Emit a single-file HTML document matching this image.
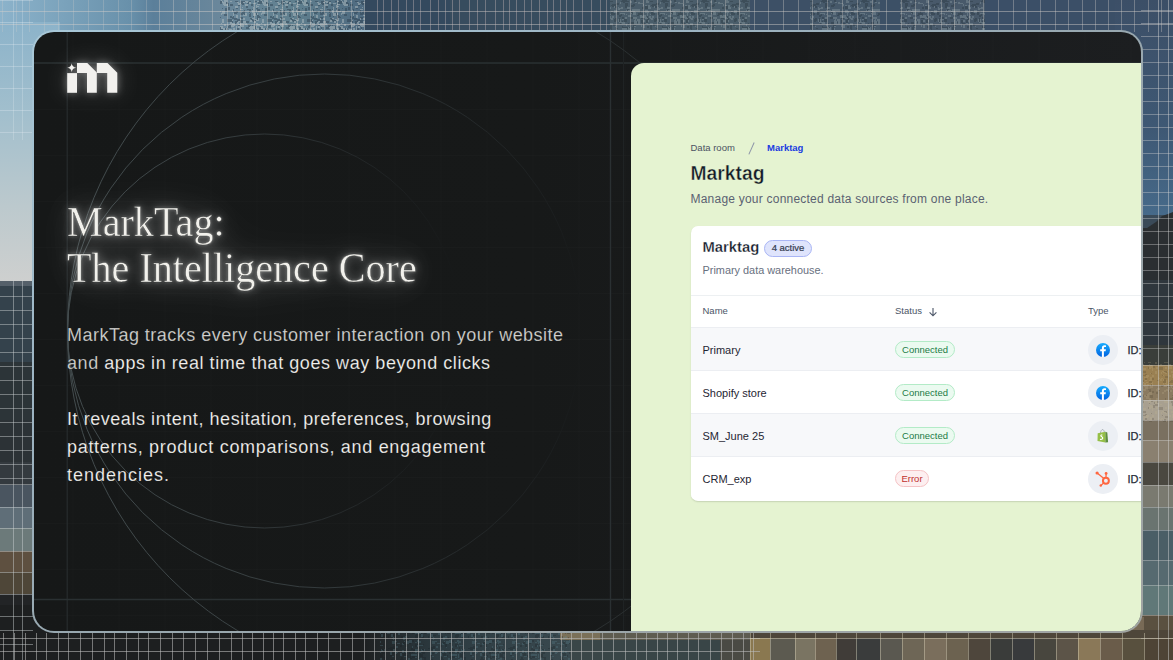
<!DOCTYPE html>
<html><head><meta charset="utf-8">
<style>
*{margin:0;padding:0;box-sizing:border-box}
html,body{width:1173px;height:660px;overflow:hidden;background:#3a4a58;font-family:"Liberation Sans",sans-serif}
#bg{position:absolute;left:0;top:0;width:1173px;height:660px}
.card{position:absolute;left:34px;top:32px;width:1107px;height:599px;border-radius:20px;overflow:hidden;background:linear-gradient(90deg,#161818 0%,#171919 45%,#1c1e20 100%)}
.cardborder{position:absolute;left:32px;top:30px;width:1111px;height:603px;border-radius:22px;background:linear-gradient(150deg,#a8c8d8 0%,#9db4c2 30%,#98a8b0 50%,#a0a4a2 100%)}
.abs{position:absolute;white-space:nowrap}
.title{font-family:"Liberation Serif",serif;font-size:42px;line-height:46px;transform-origin:0 0;transform:scaleX(0.955);color:#f2f1ec;-webkit-text-stroke:0.45px rgba(22,24,24,0.7);text-shadow:0 0 3px rgba(255,255,255,0.35);filter:drop-shadow(0 0 5px rgba(255,255,255,0.35)) drop-shadow(0 0 14px rgba(255,255,255,0.2)) drop-shadow(0 0 24px rgba(255,255,255,0.1))}
.para{font-size:18px;line-height:28px;letter-spacing:0.45px;color:#f2f1ee;-webkit-text-stroke:0.3px rgba(22,24,24,0.45)}
.panel{position:absolute;left:597px;top:30.5px;width:520px;height:580px;background:#e5f3d1;border-top-left-radius:13px;overflow:hidden}
.t{line-height:1}
.tcard{position:absolute;left:59.5px;top:163px;width:600px;height:275px;background:#fff;border-radius:7px;box-shadow:0 1px 1.5px rgba(60,70,50,0.18);overflow:hidden}
.badge{position:absolute;border:1px solid;border-radius:9px;font-size:9.5px;line-height:15px;text-align:center;white-space:nowrap}
.hdr{position:absolute;left:0;top:69px;width:600px;height:32.5px;border-top:1px solid #edf0f2;background:#fff}
.row{position:absolute;left:0;width:600px;height:43px;border-top:1px solid #eceef2}
.ic{position:absolute;width:30px;height:30px;border-radius:50%;background:#eceff4}
</style></head>
<body>
<svg id="bg" width="1173" height="660" viewBox="0 0 1173 660"><defs><pattern id="sp1" patternUnits="userSpaceOnUse" width="40" height="40"><rect x="15" y="37" width="2" height="2" fill="#2a3c4c"/><rect x="30" y="37" width="1" height="1" fill="#2a3c4c"/><rect x="30" y="16" width="2" height="2" fill="#2a3c4c"/><rect x="30" y="34" width="3" height="3" fill="#2a3c4c"/><rect x="9" y="14" width="2" height="3" fill="#2a3c4c"/><rect x="4" y="10" width="1" height="2" fill="#2a3c4c"/><rect x="17" y="30" width="3" height="3" fill="#b9c2c4"/><rect x="36" y="28" width="2" height="2" fill="#b9c2c4"/><rect x="8" y="31" width="2" height="2" fill="#2a3c4c"/><rect x="27" y="19" width="3" height="3" fill="#2a3c4c"/><rect x="34" y="37" width="3" height="2" fill="#2a3c4c"/><rect x="1" y="17" width="2" height="2" fill="#2a3c4c"/><rect x="36" y="36" width="1" height="2" fill="#2a3c4c"/><rect x="36" y="17" width="2" height="1" fill="#b9c2c4"/><rect x="30" y="5" width="2" height="1" fill="#b9c2c4"/><rect x="9" y="1" width="2" height="3" fill="#2a3c4c"/><rect x="7" y="2" width="1" height="3" fill="#2a3c4c"/><rect x="21" y="35" width="2" height="2" fill="#2a3c4c"/><rect x="19" y="0" width="1" height="1" fill="#2a3c4c"/><rect x="2" y="12" width="3" height="2" fill="#2a3c4c"/><rect x="9" y="2" width="2" height="2" fill="#b9c2c4"/><rect x="8" y="24" width="3" height="3" fill="#2a3c4c"/><rect x="24" y="38" width="1" height="2" fill="#b9c2c4"/><rect x="15" y="19" width="3" height="2" fill="#b9c2c4"/><rect x="35" y="21" width="1" height="3" fill="#2a3c4c"/><rect x="20" y="1" width="3" height="2" fill="#b9c2c4"/><rect x="21" y="29" width="2" height="2" fill="#2a3c4c"/><rect x="17" y="31" width="1" height="1" fill="#2a3c4c"/><rect x="1" y="23" width="2" height="3" fill="#b9c2c4"/><rect x="38" y="20" width="2" height="2" fill="#b9c2c4"/><rect x="23" y="38" width="2" height="2" fill="#2a3c4c"/><rect x="6" y="1" width="2" height="2" fill="#b9c2c4"/><rect x="17" y="15" width="2" height="2" fill="#2a3c4c"/><rect x="6" y="6" width="2" height="2" fill="#2a3c4c"/><rect x="14" y="28" width="2" height="1" fill="#b9c2c4"/><rect x="13" y="36" width="3" height="2" fill="#b9c2c4"/><rect x="7" y="2" width="2" height="2" fill="#2a3c4c"/><rect x="36" y="11" width="2" height="2" fill="#2a3c4c"/><rect x="5" y="22" width="2" height="3" fill="#b9c2c4"/><rect x="17" y="29" width="2" height="3" fill="#b9c2c4"/><rect x="36" y="26" width="1" height="3" fill="#b9c2c4"/><rect x="0" y="30" width="3" height="2" fill="#b9c2c4"/><rect x="29" y="33" width="2" height="2" fill="#2a3c4c"/><rect x="4" y="37" width="2" height="1" fill="#2a3c4c"/><rect x="2" y="2" width="2" height="3" fill="#2a3c4c"/><rect x="0" y="30" width="1" height="2" fill="#b9c2c4"/><rect x="15" y="1" width="3" height="1" fill="#2a3c4c"/><rect x="7" y="21" width="2" height="2" fill="#2a3c4c"/><rect x="34" y="30" width="1" height="2" fill="#b9c2c4"/><rect x="7" y="34" width="1" height="2" fill="#b9c2c4"/><rect x="17" y="8" width="1" height="3" fill="#2a3c4c"/><rect x="25" y="3" width="2" height="2" fill="#b9c2c4"/><rect x="33" y="33" width="3" height="1" fill="#b9c2c4"/><rect x="0" y="3" width="2" height="1" fill="#b9c2c4"/><rect x="4" y="30" width="1" height="1" fill="#b9c2c4"/><rect x="31" y="20" width="2" height="2" fill="#b9c2c4"/><rect x="24" y="24" width="2" height="2" fill="#b9c2c4"/><rect x="21" y="27" width="1" height="2" fill="#2a3c4c"/><rect x="24" y="5" width="2" height="1" fill="#b9c2c4"/><rect x="38" y="34" width="3" height="1" fill="#2a3c4c"/><rect x="27" y="3" width="2" height="3" fill="#2a3c4c"/><rect x="20" y="26" width="3" height="3" fill="#b9c2c4"/><rect x="13" y="34" width="2" height="1" fill="#2a3c4c"/><rect x="14" y="27" width="2" height="1" fill="#2a3c4c"/><rect x="23" y="35" width="2" height="1" fill="#b9c2c4"/><rect x="7" y="33" width="3" height="1" fill="#2a3c4c"/><rect x="36" y="34" width="1" height="1" fill="#b9c2c4"/><rect x="15" y="24" width="1" height="1" fill="#2a3c4c"/><rect x="24" y="11" width="1" height="2" fill="#2a3c4c"/><rect x="7" y="1" width="1" height="3" fill="#2a3c4c"/><rect x="18" y="37" width="2" height="1" fill="#b9c2c4"/><rect x="36" y="32" width="2" height="1" fill="#2a3c4c"/><rect x="6" y="35" width="1" height="2" fill="#2a3c4c"/><rect x="11" y="4" width="2" height="2" fill="#2a3c4c"/><rect x="29" y="25" width="2" height="2" fill="#2a3c4c"/><rect x="22" y="35" width="3" height="1" fill="#b9c2c4"/><rect x="15" y="26" width="2" height="3" fill="#2a3c4c"/><rect x="37" y="33" width="3" height="2" fill="#2a3c4c"/><rect x="9" y="10" width="1" height="3" fill="#2a3c4c"/><rect x="33" y="28" width="2" height="2" fill="#b9c2c4"/><rect x="12" y="9" width="2" height="2" fill="#2a3c4c"/><rect x="34" y="18" width="3" height="2" fill="#2a3c4c"/><rect x="19" y="1" width="2" height="3" fill="#2a3c4c"/><rect x="12" y="11" width="2" height="2" fill="#b9c2c4"/><rect x="9" y="26" width="3" height="2" fill="#b9c2c4"/><rect x="35" y="1" width="3" height="1" fill="#2a3c4c"/><rect x="25" y="2" width="3" height="2" fill="#2a3c4c"/><rect x="4" y="13" width="2" height="2" fill="#2a3c4c"/><rect x="16" y="8" width="2" height="1" fill="#2a3c4c"/><rect x="16" y="10" width="1" height="2" fill="#b9c2c4"/><rect x="5" y="5" width="1" height="1" fill="#b9c2c4"/><rect x="18" y="2" width="2" height="3" fill="#2a3c4c"/><rect x="21" y="0" width="1" height="2" fill="#b9c2c4"/><rect x="24" y="31" width="1" height="2" fill="#2a3c4c"/><rect x="31" y="25" width="2" height="2" fill="#b9c2c4"/><rect x="17" y="4" width="3" height="1" fill="#b9c2c4"/><rect x="33" y="16" width="1" height="2" fill="#2a3c4c"/><rect x="23" y="28" width="2" height="2" fill="#b9c2c4"/><rect x="21" y="36" width="1" height="3" fill="#b9c2c4"/><rect x="3" y="18" width="2" height="2" fill="#b9c2c4"/><rect x="29" y="7" width="1" height="2" fill="#2a3c4c"/><rect x="38" y="26" width="2" height="2" fill="#b9c2c4"/><rect x="19" y="11" width="1" height="1" fill="#2a3c4c"/><rect x="35" y="34" width="3" height="2" fill="#b9c2c4"/><rect x="17" y="24" width="1" height="2" fill="#b9c2c4"/><rect x="32" y="17" width="2" height="2" fill="#2a3c4c"/><rect x="25" y="28" width="1" height="2" fill="#b9c2c4"/><rect x="7" y="9" width="2" height="1" fill="#2a3c4c"/><rect x="36" y="7" width="2" height="2" fill="#2a3c4c"/><rect x="25" y="8" width="2" height="3" fill="#2a3c4c"/><rect x="34" y="33" width="2" height="2" fill="#b9c2c4"/><rect x="16" y="23" width="2" height="1" fill="#2a3c4c"/><rect x="28" y="26" width="3" height="2" fill="#2a3c4c"/><rect x="37" y="19" width="3" height="2" fill="#2a3c4c"/><rect x="30" y="1" width="2" height="1" fill="#b9c2c4"/><rect x="14" y="31" width="2" height="3" fill="#b9c2c4"/><rect x="33" y="13" width="1" height="3" fill="#b9c2c4"/><rect x="18" y="9" width="2" height="3" fill="#2a3c4c"/><rect x="3" y="1" width="2" height="2" fill="#b9c2c4"/><rect x="31" y="34" width="1" height="2" fill="#b9c2c4"/><rect x="22" y="8" width="1" height="1" fill="#2a3c4c"/><rect x="21" y="13" width="1" height="2" fill="#b9c2c4"/><rect x="14" y="31" width="2" height="1" fill="#2a3c4c"/><rect x="26" y="4" width="2" height="2" fill="#b9c2c4"/><rect x="30" y="4" width="3" height="2" fill="#2a3c4c"/><rect x="19" y="1" width="3" height="3" fill="#2a3c4c"/><rect x="25" y="28" width="2" height="3" fill="#2a3c4c"/><rect x="16" y="23" width="2" height="3" fill="#b9c2c4"/><rect x="38" y="25" width="2" height="1" fill="#2a3c4c"/><rect x="16" y="23" width="2" height="3" fill="#b9c2c4"/><rect x="10" y="13" width="1" height="2" fill="#2a3c4c"/><rect x="32" y="10" width="1" height="2" fill="#b9c2c4"/><rect x="10" y="28" width="3" height="2" fill="#b9c2c4"/><rect x="1" y="25" width="3" height="2" fill="#b9c2c4"/><rect x="3" y="15" width="3" height="1" fill="#b9c2c4"/><rect x="1" y="14" width="2" height="1" fill="#b9c2c4"/><rect x="12" y="10" width="2" height="1" fill="#b9c2c4"/><rect x="7" y="38" width="1" height="2" fill="#b9c2c4"/><rect x="29" y="19" width="3" height="2" fill="#2a3c4c"/><rect x="1" y="21" width="2" height="2" fill="#b9c2c4"/><rect x="27" y="5" width="1" height="1" fill="#b9c2c4"/><rect x="5" y="1" width="2" height="1" fill="#b9c2c4"/><rect x="12" y="32" width="2" height="2" fill="#2a3c4c"/><rect x="30" y="21" width="3" height="2" fill="#2a3c4c"/><rect x="2" y="24" width="2" height="3" fill="#b9c2c4"/><rect x="18" y="11" width="3" height="1" fill="#b9c2c4"/><rect x="35" y="21" width="3" height="2" fill="#2a3c4c"/><rect x="24" y="35" width="2" height="2" fill="#b9c2c4"/><rect x="26" y="28" width="2" height="3" fill="#2a3c4c"/><rect x="30" y="22" width="2" height="2" fill="#b9c2c4"/><rect x="38" y="24" width="3" height="1" fill="#b9c2c4"/><rect x="1" y="29" width="1" height="1" fill="#b9c2c4"/><rect x="38" y="3" width="1" height="3" fill="#b9c2c4"/><rect x="21" y="23" width="1" height="1" fill="#b9c2c4"/><rect x="6" y="21" width="2" height="1" fill="#b9c2c4"/><rect x="13" y="15" width="1" height="2" fill="#2a3c4c"/><rect x="9" y="37" width="1" height="1" fill="#b9c2c4"/><rect x="13" y="14" width="3" height="2" fill="#2a3c4c"/><rect x="34" y="12" width="3" height="2" fill="#2a3c4c"/><rect x="2" y="7" width="1" height="1" fill="#b9c2c4"/><rect x="16" y="5" width="1" height="3" fill="#b9c2c4"/><rect x="6" y="31" width="2" height="3" fill="#2a3c4c"/><rect x="28" y="7" width="2" height="3" fill="#2a3c4c"/><rect x="13" y="7" width="1" height="3" fill="#b9c2c4"/><rect x="4" y="21" width="2" height="2" fill="#b9c2c4"/><rect x="4" y="35" width="2" height="3" fill="#2a3c4c"/><rect x="4" y="38" width="2" height="2" fill="#b9c2c4"/><rect x="3" y="21" width="2" height="3" fill="#b9c2c4"/><rect x="16" y="13" width="2" height="2" fill="#2a3c4c"/><rect x="13" y="13" width="3" height="3" fill="#b9c2c4"/><rect x="12" y="26" width="3" height="3" fill="#b9c2c4"/><rect x="37" y="2" width="2" height="1" fill="#b9c2c4"/><rect x="6" y="1" width="2" height="2" fill="#b9c2c4"/><rect x="3" y="30" width="1" height="2" fill="#2a3c4c"/><rect x="17" y="31" width="3" height="1" fill="#b9c2c4"/><rect x="12" y="18" width="2" height="1" fill="#b9c2c4"/><rect x="26" y="28" width="1" height="2" fill="#b9c2c4"/><rect x="18" y="24" width="2" height="2" fill="#b9c2c4"/><rect x="29" y="30" width="2" height="2" fill="#2a3c4c"/><rect x="18" y="18" width="1" height="3" fill="#b9c2c4"/><rect x="22" y="19" width="2" height="1" fill="#b9c2c4"/><rect x="33" y="9" width="1" height="2" fill="#2a3c4c"/><rect x="0" y="13" width="3" height="2" fill="#2a3c4c"/><rect x="23" y="35" width="1" height="3" fill="#b9c2c4"/><rect x="0" y="17" width="3" height="2" fill="#2a3c4c"/><rect x="38" y="34" width="1" height="3" fill="#b9c2c4"/><rect x="15" y="31" width="3" height="2" fill="#b9c2c4"/><rect x="1" y="27" width="1" height="2" fill="#2a3c4c"/><rect x="36" y="15" width="2" height="3" fill="#b9c2c4"/><rect x="21" y="35" width="2" height="2" fill="#b9c2c4"/><rect x="2" y="1" width="3" height="1" fill="#2a3c4c"/><rect x="29" y="29" width="3" height="2" fill="#b9c2c4"/><rect x="10" y="18" width="2" height="1" fill="#2a3c4c"/><rect x="35" y="6" width="3" height="2" fill="#b9c2c4"/><rect x="17" y="16" width="3" height="2" fill="#2a3c4c"/><rect x="9" y="36" width="2" height="2" fill="#b9c2c4"/><rect x="26" y="31" width="2" height="3" fill="#2a3c4c"/><rect x="17" y="1" width="2" height="1" fill="#b9c2c4"/><rect x="17" y="17" width="1" height="3" fill="#2a3c4c"/><rect x="23" y="2" width="3" height="3" fill="#b9c2c4"/><rect x="22" y="11" width="3" height="3" fill="#b9c2c4"/><rect x="17" y="13" width="1" height="2" fill="#b9c2c4"/><rect x="25" y="35" width="2" height="1" fill="#b9c2c4"/><rect x="16" y="26" width="1" height="3" fill="#b9c2c4"/><rect x="12" y="5" width="1" height="1" fill="#2a3c4c"/><rect x="0" y="18" width="1" height="3" fill="#b9c2c4"/><rect x="30" y="29" width="2" height="2" fill="#b9c2c4"/><rect x="3" y="11" width="2" height="3" fill="#2a3c4c"/><rect x="9" y="9" width="2" height="3" fill="#2a3c4c"/><rect x="0" y="9" width="3" height="1" fill="#b9c2c4"/><rect x="11" y="19" width="2" height="2" fill="#2a3c4c"/><rect x="3" y="33" width="2" height="2" fill="#b9c2c4"/><rect x="6" y="27" width="3" height="2" fill="#2a3c4c"/><rect x="17" y="6" width="2" height="1" fill="#b9c2c4"/><rect x="8" y="24" width="2" height="1" fill="#2a3c4c"/><rect x="0" y="23" width="2" height="3" fill="#b9c2c4"/><rect x="22" y="34" width="3" height="1" fill="#2a3c4c"/><rect x="20" y="30" width="1" height="2" fill="#b9c2c4"/><rect x="28" y="36" width="3" height="3" fill="#b9c2c4"/><rect x="19" y="28" width="2" height="3" fill="#2a3c4c"/><rect x="12" y="38" width="2" height="2" fill="#b9c2c4"/><rect x="10" y="20" width="2" height="2" fill="#b9c2c4"/><rect x="38" y="3" width="3" height="2" fill="#b9c2c4"/><rect x="0" y="10" width="1" height="3" fill="#2a3c4c"/><rect x="23" y="33" width="2" height="1" fill="#b9c2c4"/><rect x="37" y="28" width="2" height="2" fill="#2a3c4c"/><rect x="13" y="20" width="3" height="2" fill="#2a3c4c"/><rect x="37" y="22" width="2" height="2" fill="#b9c2c4"/><rect x="19" y="17" width="2" height="1" fill="#2a3c4c"/><rect x="14" y="21" width="2" height="2" fill="#b9c2c4"/><rect x="17" y="28" width="2" height="3" fill="#b9c2c4"/><rect x="11" y="33" width="3" height="1" fill="#b9c2c4"/><rect x="27" y="35" width="2" height="1" fill="#b9c2c4"/><rect x="24" y="24" width="2" height="1" fill="#b9c2c4"/><rect x="13" y="3" width="3" height="1" fill="#b9c2c4"/><rect x="24" y="35" width="2" height="1" fill="#b9c2c4"/><rect x="32" y="23" width="3" height="3" fill="#b9c2c4"/><rect x="6" y="37" width="3" height="2" fill="#b9c2c4"/><rect x="0" y="23" width="1" height="1" fill="#b9c2c4"/><rect x="5" y="13" width="2" height="3" fill="#b9c2c4"/><rect x="1" y="1" width="2" height="3" fill="#2a3c4c"/><rect x="13" y="28" width="2" height="1" fill="#b9c2c4"/><rect x="24" y="14" width="3" height="2" fill="#2a3c4c"/><rect x="18" y="35" width="2" height="1" fill="#2a3c4c"/><rect x="38" y="5" width="3" height="1" fill="#2a3c4c"/><rect x="24" y="0" width="3" height="2" fill="#b9c2c4"/><rect x="8" y="24" width="2" height="3" fill="#2a3c4c"/><rect x="19" y="27" width="2" height="1" fill="#2a3c4c"/><rect x="5" y="4" width="3" height="2" fill="#b9c2c4"/><rect x="0" y="20" width="3" height="3" fill="#2a3c4c"/><rect x="6" y="21" width="3" height="2" fill="#2a3c4c"/><rect x="12" y="25" width="1" height="1" fill="#2a3c4c"/><rect x="1" y="32" width="2" height="1" fill="#b9c2c4"/><rect x="30" y="34" width="3" height="2" fill="#b9c2c4"/><rect x="29" y="33" width="2" height="2" fill="#2a3c4c"/><rect x="21" y="37" width="2" height="2" fill="#2a3c4c"/><rect x="22" y="20" width="2" height="3" fill="#b9c2c4"/><rect x="27" y="19" width="2" height="3" fill="#2a3c4c"/><rect x="13" y="11" width="1" height="3" fill="#b9c2c4"/><rect x="32" y="25" width="2" height="2" fill="#b9c2c4"/></pattern><pattern id="sp2" patternUnits="userSpaceOnUse" width="40" height="40"><rect x="2" y="20" width="3" height="2" fill="#9fb0b4"/><rect x="3" y="15" width="3" height="2" fill="#9fb0b4"/><rect x="11" y="18" width="2" height="2" fill="#9fb0b4"/><rect x="21" y="7" width="2" height="2" fill="#9fb0b4"/><rect x="11" y="36" width="2" height="2" fill="#9fb0b4"/><rect x="13" y="13" width="2" height="2" fill="#9fb0b4"/><rect x="33" y="25" width="3" height="2" fill="#1e2a32"/><rect x="28" y="23" width="1" height="1" fill="#1e2a32"/><rect x="29" y="31" width="1" height="2" fill="#9fb0b4"/><rect x="26" y="31" width="2" height="3" fill="#1e2a32"/><rect x="31" y="22" width="3" height="3" fill="#1e2a32"/><rect x="7" y="26" width="2" height="2" fill="#1e2a32"/><rect x="6" y="22" width="2" height="2" fill="#9fb0b4"/><rect x="34" y="9" width="3" height="2" fill="#9fb0b4"/><rect x="37" y="22" width="2" height="1" fill="#1e2a32"/><rect x="35" y="37" width="2" height="2" fill="#9fb0b4"/><rect x="26" y="18" width="1" height="3" fill="#1e2a32"/><rect x="22" y="27" width="3" height="2" fill="#1e2a32"/><rect x="15" y="18" width="2" height="3" fill="#1e2a32"/><rect x="20" y="35" width="2" height="2" fill="#1e2a32"/><rect x="31" y="11" width="3" height="3" fill="#9fb0b4"/><rect x="26" y="35" width="2" height="1" fill="#1e2a32"/><rect x="38" y="30" width="2" height="2" fill="#9fb0b4"/><rect x="10" y="7" width="1" height="1" fill="#1e2a32"/><rect x="35" y="32" width="2" height="3" fill="#9fb0b4"/><rect x="30" y="17" width="2" height="2" fill="#1e2a32"/><rect x="7" y="13" width="1" height="3" fill="#9fb0b4"/><rect x="9" y="16" width="2" height="2" fill="#9fb0b4"/><rect x="32" y="12" width="2" height="2" fill="#1e2a32"/><rect x="22" y="21" width="1" height="1" fill="#1e2a32"/><rect x="8" y="5" width="2" height="3" fill="#9fb0b4"/><rect x="7" y="20" width="2" height="2" fill="#9fb0b4"/><rect x="31" y="17" width="2" height="2" fill="#1e2a32"/><rect x="28" y="27" width="3" height="3" fill="#9fb0b4"/><rect x="34" y="17" width="3" height="2" fill="#9fb0b4"/><rect x="10" y="27" width="1" height="2" fill="#1e2a32"/><rect x="8" y="32" width="2" height="2" fill="#9fb0b4"/><rect x="35" y="36" width="2" height="2" fill="#9fb0b4"/><rect x="13" y="4" width="3" height="3" fill="#1e2a32"/><rect x="9" y="7" width="2" height="2" fill="#9fb0b4"/><rect x="5" y="5" width="2" height="1" fill="#9fb0b4"/><rect x="5" y="33" width="3" height="3" fill="#1e2a32"/><rect x="28" y="16" width="2" height="1" fill="#9fb0b4"/><rect x="26" y="10" width="1" height="1" fill="#9fb0b4"/><rect x="20" y="23" width="1" height="1" fill="#1e2a32"/><rect x="24" y="0" width="3" height="2" fill="#1e2a32"/><rect x="28" y="28" width="2" height="1" fill="#9fb0b4"/><rect x="14" y="10" width="3" height="3" fill="#9fb0b4"/><rect x="20" y="36" width="1" height="2" fill="#9fb0b4"/><rect x="1" y="25" width="1" height="2" fill="#9fb0b4"/><rect x="29" y="36" width="2" height="3" fill="#1e2a32"/><rect x="13" y="33" width="3" height="2" fill="#1e2a32"/><rect x="11" y="28" width="1" height="2" fill="#1e2a32"/><rect x="37" y="9" width="3" height="2" fill="#9fb0b4"/><rect x="33" y="10" width="2" height="2" fill="#9fb0b4"/><rect x="18" y="7" width="1" height="3" fill="#9fb0b4"/><rect x="15" y="26" width="1" height="1" fill="#9fb0b4"/><rect x="0" y="3" width="3" height="1" fill="#9fb0b4"/><rect x="18" y="19" width="3" height="3" fill="#9fb0b4"/><rect x="19" y="8" width="2" height="1" fill="#9fb0b4"/><rect x="2" y="7" width="2" height="2" fill="#9fb0b4"/><rect x="25" y="33" width="2" height="2" fill="#9fb0b4"/><rect x="19" y="32" width="1" height="3" fill="#9fb0b4"/><rect x="31" y="5" width="3" height="2" fill="#1e2a32"/><rect x="25" y="27" width="3" height="2" fill="#1e2a32"/><rect x="1" y="20" width="2" height="3" fill="#1e2a32"/><rect x="16" y="30" width="2" height="2" fill="#9fb0b4"/><rect x="16" y="30" width="3" height="3" fill="#1e2a32"/><rect x="21" y="38" width="1" height="2" fill="#1e2a32"/><rect x="3" y="25" width="2" height="3" fill="#9fb0b4"/><rect x="6" y="11" width="3" height="2" fill="#9fb0b4"/><rect x="26" y="36" width="2" height="3" fill="#9fb0b4"/><rect x="2" y="23" width="3" height="2" fill="#1e2a32"/><rect x="25" y="17" width="2" height="2" fill="#9fb0b4"/><rect x="12" y="38" width="1" height="3" fill="#1e2a32"/><rect x="6" y="38" width="3" height="3" fill="#9fb0b4"/><rect x="32" y="32" width="3" height="2" fill="#9fb0b4"/><rect x="3" y="35" width="2" height="1" fill="#9fb0b4"/><rect x="6" y="8" width="3" height="1" fill="#9fb0b4"/><rect x="38" y="13" width="2" height="2" fill="#1e2a32"/><rect x="27" y="9" width="2" height="2" fill="#1e2a32"/><rect x="27" y="31" width="2" height="3" fill="#9fb0b4"/><rect x="1" y="16" width="1" height="2" fill="#9fb0b4"/><rect x="24" y="13" width="1" height="2" fill="#9fb0b4"/><rect x="13" y="24" width="2" height="2" fill="#1e2a32"/><rect x="21" y="14" width="1" height="2" fill="#1e2a32"/><rect x="13" y="34" width="2" height="3" fill="#9fb0b4"/><rect x="19" y="15" width="2" height="2" fill="#1e2a32"/><rect x="4" y="16" width="2" height="2" fill="#9fb0b4"/><rect x="22" y="13" width="2" height="1" fill="#9fb0b4"/><rect x="16" y="3" width="3" height="2" fill="#1e2a32"/><rect x="33" y="12" width="3" height="2" fill="#9fb0b4"/><rect x="5" y="6" width="3" height="3" fill="#1e2a32"/><rect x="37" y="15" width="2" height="1" fill="#1e2a32"/><rect x="7" y="1" width="2" height="2" fill="#9fb0b4"/><rect x="10" y="14" width="2" height="1" fill="#9fb0b4"/><rect x="20" y="38" width="1" height="3" fill="#1e2a32"/><rect x="35" y="18" width="1" height="3" fill="#9fb0b4"/><rect x="28" y="10" width="3" height="1" fill="#9fb0b4"/><rect x="10" y="23" width="3" height="2" fill="#9fb0b4"/><rect x="33" y="12" width="3" height="3" fill="#9fb0b4"/><rect x="23" y="0" width="2" height="3" fill="#1e2a32"/><rect x="34" y="28" width="1" height="3" fill="#9fb0b4"/><rect x="19" y="11" width="2" height="1" fill="#1e2a32"/><rect x="11" y="11" width="2" height="2" fill="#9fb0b4"/><rect x="34" y="0" width="2" height="2" fill="#1e2a32"/><rect x="3" y="24" width="2" height="1" fill="#1e2a32"/><rect x="32" y="28" width="2" height="3" fill="#1e2a32"/><rect x="29" y="27" width="1" height="1" fill="#1e2a32"/><rect x="5" y="5" width="2" height="1" fill="#9fb0b4"/><rect x="21" y="1" width="2" height="1" fill="#1e2a32"/><rect x="2" y="7" width="2" height="2" fill="#1e2a32"/><rect x="19" y="20" width="1" height="2" fill="#1e2a32"/><rect x="0" y="13" width="3" height="2" fill="#1e2a32"/><rect x="22" y="28" width="3" height="3" fill="#9fb0b4"/><rect x="19" y="18" width="1" height="2" fill="#1e2a32"/><rect x="34" y="21" width="3" height="3" fill="#9fb0b4"/><rect x="34" y="20" width="2" height="2" fill="#9fb0b4"/><rect x="10" y="18" width="2" height="1" fill="#9fb0b4"/><rect x="24" y="19" width="3" height="3" fill="#1e2a32"/><rect x="32" y="27" width="2" height="1" fill="#1e2a32"/><rect x="0" y="38" width="2" height="3" fill="#1e2a32"/><rect x="29" y="33" width="2" height="3" fill="#9fb0b4"/><rect x="31" y="12" width="2" height="1" fill="#1e2a32"/><rect x="4" y="31" width="3" height="3" fill="#1e2a32"/><rect x="12" y="16" width="2" height="2" fill="#9fb0b4"/><rect x="11" y="12" width="2" height="3" fill="#1e2a32"/><rect x="7" y="18" width="2" height="2" fill="#1e2a32"/><rect x="6" y="0" width="2" height="3" fill="#9fb0b4"/><rect x="38" y="2" width="2" height="2" fill="#9fb0b4"/><rect x="29" y="37" width="3" height="2" fill="#1e2a32"/><rect x="33" y="30" width="2" height="2" fill="#9fb0b4"/><rect x="35" y="2" width="2" height="1" fill="#9fb0b4"/><rect x="0" y="11" width="1" height="3" fill="#9fb0b4"/><rect x="6" y="10" width="2" height="2" fill="#9fb0b4"/><rect x="32" y="34" width="1" height="1" fill="#1e2a32"/><rect x="14" y="20" width="2" height="2" fill="#1e2a32"/><rect x="22" y="22" width="3" height="2" fill="#9fb0b4"/><rect x="25" y="3" width="3" height="3" fill="#1e2a32"/><rect x="5" y="17" width="3" height="2" fill="#9fb0b4"/><rect x="0" y="11" width="1" height="3" fill="#1e2a32"/><rect x="25" y="27" width="2" height="1" fill="#1e2a32"/><rect x="2" y="16" width="2" height="2" fill="#9fb0b4"/><rect x="22" y="26" width="1" height="2" fill="#1e2a32"/><rect x="22" y="32" width="2" height="3" fill="#9fb0b4"/><rect x="22" y="18" width="2" height="2" fill="#9fb0b4"/><rect x="0" y="15" width="2" height="3" fill="#9fb0b4"/><rect x="8" y="36" width="3" height="3" fill="#1e2a32"/><rect x="10" y="25" width="2" height="3" fill="#1e2a32"/><rect x="25" y="5" width="2" height="3" fill="#1e2a32"/><rect x="13" y="36" width="2" height="2" fill="#9fb0b4"/><rect x="24" y="35" width="3" height="2" fill="#1e2a32"/><rect x="33" y="4" width="2" height="2" fill="#1e2a32"/><rect x="17" y="12" width="2" height="3" fill="#1e2a32"/><rect x="13" y="13" width="2" height="2" fill="#1e2a32"/><rect x="16" y="28" width="2" height="1" fill="#1e2a32"/><rect x="7" y="32" width="1" height="3" fill="#1e2a32"/><rect x="2" y="34" width="2" height="2" fill="#1e2a32"/><rect x="8" y="33" width="2" height="2" fill="#1e2a32"/><rect x="11" y="30" width="3" height="2" fill="#9fb0b4"/><rect x="10" y="37" width="3" height="1" fill="#9fb0b4"/><rect x="22" y="0" width="3" height="1" fill="#1e2a32"/><rect x="27" y="7" width="3" height="2" fill="#9fb0b4"/><rect x="19" y="22" width="3" height="1" fill="#9fb0b4"/><rect x="12" y="4" width="2" height="3" fill="#1e2a32"/><rect x="7" y="16" width="1" height="2" fill="#1e2a32"/><rect x="22" y="17" width="2" height="2" fill="#1e2a32"/><rect x="3" y="4" width="1" height="2" fill="#9fb0b4"/><rect x="14" y="6" width="2" height="2" fill="#9fb0b4"/><rect x="5" y="10" width="3" height="3" fill="#9fb0b4"/><rect x="6" y="20" width="2" height="3" fill="#1e2a32"/><rect x="26" y="14" width="1" height="1" fill="#9fb0b4"/><rect x="4" y="35" width="2" height="2" fill="#9fb0b4"/><rect x="11" y="5" width="2" height="1" fill="#1e2a32"/><rect x="32" y="9" width="2" height="2" fill="#9fb0b4"/><rect x="31" y="17" width="3" height="1" fill="#1e2a32"/><rect x="14" y="19" width="2" height="1" fill="#1e2a32"/><rect x="10" y="1" width="3" height="1" fill="#1e2a32"/><rect x="15" y="6" width="2" height="2" fill="#1e2a32"/><rect x="20" y="13" width="3" height="1" fill="#9fb0b4"/><rect x="28" y="15" width="3" height="2" fill="#9fb0b4"/><rect x="36" y="38" width="2" height="2" fill="#1e2a32"/><rect x="33" y="17" width="1" height="2" fill="#9fb0b4"/><rect x="26" y="1" width="3" height="1" fill="#1e2a32"/><rect x="34" y="26" width="2" height="1" fill="#9fb0b4"/><rect x="30" y="1" width="2" height="2" fill="#9fb0b4"/><rect x="38" y="21" width="3" height="3" fill="#9fb0b4"/><rect x="6" y="22" width="1" height="1" fill="#1e2a32"/><rect x="20" y="2" width="1" height="2" fill="#9fb0b4"/><rect x="1" y="18" width="3" height="1" fill="#1e2a32"/><rect x="26" y="24" width="1" height="2" fill="#9fb0b4"/><rect x="35" y="22" width="2" height="1" fill="#9fb0b4"/><rect x="37" y="19" width="3" height="2" fill="#9fb0b4"/><rect x="5" y="37" width="2" height="3" fill="#1e2a32"/><rect x="5" y="24" width="2" height="1" fill="#1e2a32"/><rect x="33" y="35" width="2" height="2" fill="#9fb0b4"/><rect x="33" y="37" width="3" height="3" fill="#1e2a32"/><rect x="18" y="9" width="2" height="1" fill="#9fb0b4"/><rect x="32" y="29" width="2" height="3" fill="#1e2a32"/><rect x="25" y="28" width="2" height="3" fill="#9fb0b4"/></pattern><pattern id="sp3" patternUnits="userSpaceOnUse" width="40" height="40"><rect x="19" y="5" width="2" height="1" fill="#5f8a98"/><rect x="24" y="27" width="2" height="3" fill="#5f8a98"/><rect x="14" y="29" width="3" height="2" fill="#141a1e"/><rect x="37" y="24" width="3" height="2" fill="#141a1e"/><rect x="19" y="1" width="2" height="2" fill="#5f8a98"/><rect x="37" y="12" width="1" height="1" fill="#5f8a98"/><rect x="33" y="24" width="3" height="3" fill="#141a1e"/><rect x="9" y="0" width="3" height="3" fill="#5f8a98"/><rect x="15" y="11" width="2" height="2" fill="#5f8a98"/><rect x="36" y="22" width="2" height="1" fill="#5f8a98"/><rect x="3" y="37" width="2" height="3" fill="#5f8a98"/><rect x="0" y="13" width="3" height="1" fill="#141a1e"/><rect x="0" y="5" width="2" height="2" fill="#141a1e"/><rect x="4" y="30" width="3" height="1" fill="#5f8a98"/><rect x="1" y="19" width="3" height="2" fill="#141a1e"/><rect x="15" y="9" width="3" height="1" fill="#5f8a98"/><rect x="7" y="15" width="1" height="2" fill="#141a1e"/><rect x="20" y="28" width="1" height="3" fill="#5f8a98"/><rect x="4" y="21" width="1" height="3" fill="#141a1e"/><rect x="15" y="24" width="2" height="2" fill="#5f8a98"/><rect x="22" y="23" width="2" height="1" fill="#141a1e"/><rect x="11" y="28" width="1" height="2" fill="#141a1e"/><rect x="22" y="14" width="1" height="2" fill="#5f8a98"/><rect x="19" y="29" width="2" height="1" fill="#5f8a98"/><rect x="12" y="6" width="1" height="2" fill="#5f8a98"/><rect x="12" y="11" width="2" height="1" fill="#141a1e"/><rect x="9" y="12" width="2" height="2" fill="#141a1e"/><rect x="15" y="4" width="2" height="3" fill="#141a1e"/><rect x="15" y="17" width="2" height="1" fill="#5f8a98"/><rect x="23" y="21" width="2" height="2" fill="#141a1e"/><rect x="28" y="36" width="1" height="2" fill="#141a1e"/><rect x="12" y="16" width="3" height="2" fill="#141a1e"/><rect x="19" y="12" width="2" height="1" fill="#5f8a98"/><rect x="7" y="32" width="3" height="2" fill="#5f8a98"/><rect x="9" y="3" width="2" height="1" fill="#141a1e"/><rect x="17" y="0" width="2" height="2" fill="#5f8a98"/><rect x="16" y="11" width="3" height="2" fill="#141a1e"/><rect x="20" y="33" width="2" height="2" fill="#141a1e"/><rect x="20" y="27" width="1" height="3" fill="#5f8a98"/><rect x="36" y="7" width="2" height="1" fill="#141a1e"/><rect x="32" y="1" width="3" height="3" fill="#5f8a98"/><rect x="20" y="18" width="2" height="2" fill="#5f8a98"/><rect x="4" y="1" width="1" height="3" fill="#5f8a98"/><rect x="33" y="9" width="2" height="3" fill="#5f8a98"/><rect x="21" y="27" width="1" height="3" fill="#5f8a98"/><rect x="24" y="32" width="2" height="2" fill="#141a1e"/><rect x="16" y="10" width="2" height="1" fill="#5f8a98"/><rect x="5" y="11" width="2" height="2" fill="#141a1e"/><rect x="4" y="26" width="1" height="3" fill="#5f8a98"/><rect x="33" y="30" width="2" height="1" fill="#5f8a98"/><rect x="32" y="16" width="2" height="1" fill="#5f8a98"/><rect x="15" y="35" width="3" height="3" fill="#141a1e"/><rect x="1" y="31" width="3" height="2" fill="#5f8a98"/><rect x="21" y="5" width="2" height="1" fill="#5f8a98"/><rect x="34" y="28" width="2" height="2" fill="#141a1e"/><rect x="1" y="36" width="2" height="2" fill="#141a1e"/><rect x="33" y="6" width="2" height="3" fill="#141a1e"/><rect x="28" y="31" width="1" height="2" fill="#5f8a98"/><rect x="22" y="27" width="2" height="2" fill="#141a1e"/><rect x="21" y="9" width="2" height="3" fill="#5f8a98"/><rect x="23" y="4" width="1" height="1" fill="#141a1e"/><rect x="38" y="27" width="2" height="3" fill="#141a1e"/><rect x="24" y="17" width="2" height="3" fill="#141a1e"/><rect x="37" y="3" width="3" height="1" fill="#5f8a98"/><rect x="15" y="9" width="2" height="2" fill="#5f8a98"/><rect x="18" y="32" width="3" height="2" fill="#5f8a98"/><rect x="20" y="13" width="1" height="1" fill="#141a1e"/><rect x="5" y="20" width="2" height="3" fill="#141a1e"/><rect x="8" y="37" width="1" height="2" fill="#141a1e"/><rect x="11" y="8" width="2" height="2" fill="#141a1e"/><rect x="31" y="19" width="2" height="2" fill="#141a1e"/><rect x="22" y="22" width="2" height="2" fill="#141a1e"/><rect x="8" y="18" width="2" height="2" fill="#5f8a98"/><rect x="23" y="29" width="3" height="1" fill="#5f8a98"/><rect x="0" y="27" width="3" height="3" fill="#141a1e"/><rect x="38" y="33" width="3" height="2" fill="#5f8a98"/><rect x="29" y="22" width="1" height="2" fill="#5f8a98"/><rect x="7" y="3" width="1" height="1" fill="#141a1e"/><rect x="23" y="28" width="3" height="2" fill="#5f8a98"/><rect x="0" y="13" width="2" height="3" fill="#5f8a98"/><rect x="36" y="24" width="2" height="2" fill="#5f8a98"/><rect x="22" y="12" width="3" height="2" fill="#141a1e"/><rect x="32" y="13" width="2" height="1" fill="#141a1e"/><rect x="16" y="29" width="2" height="2" fill="#5f8a98"/><rect x="30" y="7" width="3" height="3" fill="#141a1e"/><rect x="18" y="15" width="1" height="3" fill="#5f8a98"/><rect x="16" y="4" width="2" height="3" fill="#141a1e"/><rect x="28" y="8" width="3" height="1" fill="#141a1e"/><rect x="31" y="30" width="3" height="2" fill="#5f8a98"/><rect x="19" y="7" width="1" height="2" fill="#141a1e"/><rect x="22" y="17" width="2" height="1" fill="#141a1e"/><rect x="33" y="37" width="1" height="3" fill="#5f8a98"/><rect x="4" y="24" width="3" height="1" fill="#141a1e"/><rect x="0" y="19" width="2" height="2" fill="#141a1e"/><rect x="20" y="25" width="2" height="2" fill="#5f8a98"/><rect x="15" y="33" width="3" height="1" fill="#5f8a98"/><rect x="22" y="36" width="2" height="2" fill="#141a1e"/><rect x="5" y="36" width="2" height="2" fill="#5f8a98"/><rect x="12" y="33" width="2" height="1" fill="#141a1e"/><rect x="33" y="35" width="3" height="1" fill="#141a1e"/><rect x="3" y="13" width="3" height="3" fill="#141a1e"/><rect x="22" y="23" width="2" height="3" fill="#5f8a98"/><rect x="26" y="24" width="2" height="2" fill="#5f8a98"/><rect x="12" y="0" width="2" height="2" fill="#141a1e"/><rect x="2" y="3" width="2" height="2" fill="#5f8a98"/><rect x="33" y="29" width="2" height="2" fill="#141a1e"/><rect x="35" y="23" width="2" height="3" fill="#141a1e"/><rect x="27" y="32" width="3" height="2" fill="#5f8a98"/><rect x="16" y="34" width="3" height="3" fill="#141a1e"/><rect x="18" y="1" width="1" height="3" fill="#5f8a98"/><rect x="6" y="6" width="1" height="2" fill="#5f8a98"/><rect x="16" y="37" width="2" height="2" fill="#141a1e"/><rect x="6" y="30" width="3" height="2" fill="#141a1e"/><rect x="31" y="36" width="1" height="1" fill="#141a1e"/><rect x="15" y="27" width="2" height="3" fill="#141a1e"/><rect x="9" y="20" width="2" height="2" fill="#141a1e"/><rect x="10" y="16" width="1" height="3" fill="#141a1e"/><rect x="5" y="4" width="2" height="3" fill="#141a1e"/><rect x="20" y="14" width="3" height="1" fill="#5f8a98"/><rect x="15" y="2" width="2" height="1" fill="#5f8a98"/><rect x="38" y="21" width="2" height="3" fill="#141a1e"/><rect x="6" y="30" width="2" height="1" fill="#141a1e"/><rect x="2" y="10" width="2" height="3" fill="#5f8a98"/><rect x="6" y="1" width="3" height="3" fill="#5f8a98"/><rect x="30" y="14" width="2" height="2" fill="#141a1e"/><rect x="28" y="20" width="3" height="2" fill="#141a1e"/><rect x="23" y="26" width="3" height="1" fill="#5f8a98"/><rect x="36" y="6" width="2" height="2" fill="#5f8a98"/><rect x="12" y="11" width="1" height="2" fill="#141a1e"/><rect x="8" y="30" width="2" height="2" fill="#5f8a98"/><rect x="10" y="18" width="2" height="1" fill="#141a1e"/><rect x="31" y="34" width="2" height="3" fill="#5f8a98"/><rect x="30" y="12" width="2" height="3" fill="#5f8a98"/><rect x="24" y="18" width="2" height="3" fill="#141a1e"/><rect x="13" y="23" width="1" height="2" fill="#5f8a98"/><rect x="5" y="32" width="1" height="2" fill="#141a1e"/><rect x="32" y="38" width="3" height="1" fill="#5f8a98"/><rect x="15" y="11" width="2" height="2" fill="#5f8a98"/><rect x="18" y="19" width="2" height="3" fill="#5f8a98"/><rect x="3" y="2" width="2" height="2" fill="#141a1e"/><rect x="21" y="34" width="2" height="3" fill="#5f8a98"/><rect x="35" y="1" width="2" height="1" fill="#5f8a98"/><rect x="5" y="11" width="2" height="2" fill="#5f8a98"/><rect x="17" y="5" width="1" height="2" fill="#5f8a98"/><rect x="37" y="24" width="1" height="1" fill="#5f8a98"/><rect x="28" y="38" width="2" height="1" fill="#141a1e"/><rect x="17" y="29" width="3" height="2" fill="#5f8a98"/><rect x="35" y="11" width="2" height="3" fill="#5f8a98"/><rect x="7" y="32" width="3" height="2" fill="#141a1e"/><rect x="14" y="14" width="3" height="2" fill="#5f8a98"/><rect x="11" y="14" width="3" height="2" fill="#5f8a98"/><rect x="18" y="14" width="1" height="2" fill="#5f8a98"/><rect x="34" y="23" width="3" height="3" fill="#5f8a98"/><rect x="20" y="14" width="3" height="3" fill="#141a1e"/><rect x="22" y="9" width="2" height="1" fill="#141a1e"/><rect x="4" y="16" width="3" height="1" fill="#5f8a98"/><rect x="13" y="9" width="2" height="2" fill="#141a1e"/><rect x="1" y="17" width="2" height="2" fill="#141a1e"/><rect x="24" y="9" width="1" height="2" fill="#5f8a98"/><rect x="11" y="28" width="2" height="2" fill="#141a1e"/></pattern><pattern id="sp4" patternUnits="userSpaceOnUse" width="40" height="40"><rect x="14" y="11" width="2" height="1" fill="#c8b890"/><rect x="31" y="22" width="2" height="3" fill="#c8b890"/><rect x="24" y="23" width="2" height="2" fill="#c8b890"/><rect x="30" y="19" width="3" height="1" fill="#c8b890"/><rect x="28" y="35" width="1" height="1" fill="#c8b890"/><rect x="18" y="14" width="2" height="2" fill="#3a3426"/><rect x="19" y="11" width="2" height="2" fill="#3a3426"/><rect x="22" y="4" width="2" height="2" fill="#c8b890"/><rect x="20" y="35" width="2" height="1" fill="#c8b890"/><rect x="26" y="35" width="3" height="2" fill="#3a3426"/><rect x="6" y="11" width="1" height="3" fill="#3a3426"/><rect x="10" y="38" width="3" height="3" fill="#3a3426"/><rect x="18" y="7" width="2" height="1" fill="#c8b890"/><rect x="14" y="38" width="2" height="1" fill="#3a3426"/><rect x="26" y="16" width="2" height="2" fill="#c8b890"/><rect x="38" y="18" width="3" height="1" fill="#c8b890"/><rect x="16" y="3" width="2" height="2" fill="#c8b890"/><rect x="27" y="34" width="1" height="2" fill="#c8b890"/><rect x="18" y="8" width="2" height="1" fill="#c8b890"/><rect x="15" y="31" width="3" height="1" fill="#c8b890"/><rect x="9" y="22" width="3" height="1" fill="#3a3426"/><rect x="6" y="29" width="2" height="2" fill="#c8b890"/><rect x="13" y="35" width="1" height="1" fill="#c8b890"/><rect x="4" y="0" width="2" height="3" fill="#c8b890"/><rect x="9" y="15" width="2" height="2" fill="#c8b890"/><rect x="36" y="32" width="2" height="2" fill="#3a3426"/><rect x="12" y="3" width="1" height="3" fill="#3a3426"/><rect x="15" y="34" width="1" height="3" fill="#c8b890"/><rect x="14" y="28" width="2" height="1" fill="#c8b890"/><rect x="19" y="27" width="1" height="1" fill="#3a3426"/><rect x="2" y="15" width="2" height="1" fill="#3a3426"/><rect x="0" y="7" width="3" height="3" fill="#3a3426"/><rect x="38" y="7" width="2" height="3" fill="#3a3426"/><rect x="11" y="25" width="1" height="3" fill="#c8b890"/><rect x="3" y="11" width="2" height="2" fill="#c8b890"/><rect x="18" y="30" width="2" height="2" fill="#3a3426"/><rect x="28" y="36" width="1" height="3" fill="#c8b890"/><rect x="37" y="28" width="3" height="2" fill="#c8b890"/><rect x="23" y="8" width="3" height="2" fill="#c8b890"/><rect x="30" y="17" width="2" height="3" fill="#c8b890"/><rect x="31" y="27" width="1" height="1" fill="#c8b890"/><rect x="23" y="35" width="3" height="2" fill="#c8b890"/><rect x="15" y="10" width="2" height="1" fill="#c8b890"/><rect x="18" y="37" width="2" height="1" fill="#3a3426"/><rect x="33" y="15" width="1" height="1" fill="#3a3426"/><rect x="32" y="15" width="2" height="2" fill="#c8b890"/><rect x="37" y="20" width="2" height="1" fill="#3a3426"/><rect x="5" y="7" width="2" height="2" fill="#c8b890"/><rect x="32" y="18" width="2" height="2" fill="#3a3426"/><rect x="29" y="20" width="3" height="3" fill="#c8b890"/><rect x="14" y="27" width="1" height="2" fill="#c8b890"/><rect x="30" y="13" width="1" height="1" fill="#c8b890"/><rect x="30" y="5" width="2" height="3" fill="#c8b890"/><rect x="4" y="11" width="3" height="1" fill="#3a3426"/><rect x="26" y="22" width="2" height="1" fill="#c8b890"/><rect x="5" y="22" width="2" height="2" fill="#c8b890"/><rect x="21" y="21" width="3" height="2" fill="#c8b890"/><rect x="5" y="0" width="2" height="3" fill="#c8b890"/><rect x="28" y="7" width="3" height="2" fill="#3a3426"/><rect x="35" y="4" width="3" height="2" fill="#3a3426"/><rect x="19" y="1" width="2" height="2" fill="#3a3426"/><rect x="18" y="17" width="3" height="2" fill="#c8b890"/><rect x="12" y="28" width="1" height="1" fill="#c8b890"/><rect x="14" y="32" width="2" height="1" fill="#3a3426"/><rect x="13" y="26" width="1" height="2" fill="#3a3426"/><rect x="16" y="6" width="2" height="2" fill="#3a3426"/><rect x="18" y="1" width="1" height="2" fill="#3a3426"/><rect x="23" y="1" width="2" height="2" fill="#c8b890"/><rect x="12" y="1" width="3" height="1" fill="#c8b890"/><rect x="5" y="21" width="1" height="1" fill="#3a3426"/><rect x="20" y="17" width="3" height="3" fill="#c8b890"/><rect x="13" y="17" width="3" height="3" fill="#c8b890"/><rect x="19" y="30" width="2" height="2" fill="#c8b890"/><rect x="33" y="5" width="2" height="3" fill="#3a3426"/><rect x="29" y="6" width="2" height="3" fill="#c8b890"/><rect x="29" y="38" width="2" height="2" fill="#c8b890"/><rect x="14" y="23" width="2" height="2" fill="#c8b890"/><rect x="30" y="0" width="2" height="2" fill="#c8b890"/><rect x="3" y="15" width="1" height="1" fill="#c8b890"/><rect x="22" y="32" width="2" height="2" fill="#c8b890"/><rect x="27" y="24" width="2" height="2" fill="#c8b890"/><rect x="38" y="17" width="1" height="2" fill="#c8b890"/><rect x="18" y="1" width="3" height="3" fill="#c8b890"/><rect x="4" y="25" width="3" height="2" fill="#c8b890"/><rect x="9" y="30" width="3" height="2" fill="#3a3426"/><rect x="12" y="35" width="2" height="1" fill="#3a3426"/><rect x="23" y="11" width="3" height="2" fill="#3a3426"/><rect x="36" y="38" width="2" height="2" fill="#c8b890"/><rect x="16" y="26" width="2" height="1" fill="#c8b890"/><rect x="1" y="25" width="2" height="2" fill="#3a3426"/><rect x="2" y="32" width="2" height="2" fill="#c8b890"/><rect x="27" y="35" width="2" height="1" fill="#c8b890"/><rect x="14" y="17" width="2" height="1" fill="#3a3426"/><rect x="32" y="8" width="1" height="3" fill="#c8b890"/><rect x="12" y="14" width="2" height="3" fill="#c8b890"/><rect x="0" y="4" width="2" height="1" fill="#c8b890"/><rect x="31" y="35" width="2" height="2" fill="#c8b890"/><rect x="31" y="1" width="2" height="1" fill="#3a3426"/><rect x="5" y="38" width="1" height="2" fill="#3a3426"/><rect x="20" y="7" width="2" height="2" fill="#c8b890"/><rect x="18" y="19" width="2" height="3" fill="#c8b890"/><rect x="21" y="20" width="3" height="2" fill="#3a3426"/><rect x="9" y="26" width="1" height="2" fill="#c8b890"/><rect x="2" y="11" width="2" height="1" fill="#c8b890"/><rect x="17" y="7" width="2" height="2" fill="#c8b890"/><rect x="7" y="24" width="3" height="3" fill="#3a3426"/><rect x="18" y="4" width="3" height="2" fill="#3a3426"/><rect x="22" y="0" width="2" height="3" fill="#3a3426"/><rect x="32" y="6" width="1" height="2" fill="#c8b890"/><rect x="31" y="13" width="1" height="1" fill="#3a3426"/><rect x="11" y="1" width="2" height="2" fill="#3a3426"/><rect x="27" y="37" width="1" height="2" fill="#c8b890"/><rect x="26" y="36" width="3" height="3" fill="#c8b890"/><rect x="34" y="2" width="3" height="2" fill="#c8b890"/><rect x="34" y="2" width="1" height="2" fill="#3a3426"/><rect x="11" y="11" width="2" height="2" fill="#c8b890"/><rect x="10" y="21" width="3" height="2" fill="#3a3426"/><rect x="32" y="31" width="2" height="2" fill="#3a3426"/><rect x="37" y="0" width="2" height="3" fill="#3a3426"/><rect x="13" y="18" width="3" height="2" fill="#c8b890"/><rect x="10" y="6" width="2" height="3" fill="#c8b890"/><rect x="7" y="24" width="1" height="2" fill="#c8b890"/><rect x="29" y="4" width="1" height="1" fill="#c8b890"/><rect x="3" y="19" width="2" height="3" fill="#c8b890"/><rect x="34" y="6" width="1" height="1" fill="#3a3426"/><rect x="25" y="18" width="2" height="3" fill="#c8b890"/><rect x="9" y="4" width="2" height="2" fill="#c8b890"/><rect x="1" y="12" width="1" height="2" fill="#c8b890"/><rect x="25" y="14" width="2" height="2" fill="#3a3426"/><rect x="36" y="7" width="2" height="2" fill="#c8b890"/><rect x="30" y="25" width="3" height="3" fill="#c8b890"/><rect x="19" y="25" width="2" height="1" fill="#3a3426"/><rect x="8" y="30" width="1" height="2" fill="#c8b890"/><rect x="19" y="23" width="2" height="2" fill="#c8b890"/><rect x="4" y="30" width="2" height="2" fill="#c8b890"/><rect x="0" y="19" width="2" height="2" fill="#c8b890"/><rect x="8" y="24" width="1" height="2" fill="#c8b890"/><rect x="29" y="21" width="3" height="2" fill="#3a3426"/><rect x="25" y="26" width="3" height="3" fill="#c8b890"/><rect x="14" y="6" width="3" height="2" fill="#c8b890"/><rect x="28" y="33" width="2" height="2" fill="#c8b890"/><rect x="13" y="9" width="3" height="1" fill="#3a3426"/><rect x="31" y="24" width="1" height="2" fill="#3a3426"/><rect x="14" y="30" width="2" height="3" fill="#c8b890"/><rect x="20" y="10" width="2" height="2" fill="#c8b890"/><rect x="17" y="16" width="1" height="2" fill="#c8b890"/><rect x="18" y="23" width="3" height="2" fill="#c8b890"/><rect x="24" y="17" width="2" height="1" fill="#c8b890"/><rect x="37" y="30" width="3" height="1" fill="#3a3426"/><rect x="24" y="25" width="3" height="2" fill="#c8b890"/><rect x="12" y="37" width="2" height="2" fill="#3a3426"/><rect x="21" y="9" width="1" height="2" fill="#3a3426"/><rect x="17" y="11" width="2" height="1" fill="#c8b890"/><rect x="17" y="20" width="2" height="2" fill="#c8b890"/><rect x="4" y="20" width="2" height="3" fill="#c8b890"/><rect x="18" y="8" width="1" height="2" fill="#c8b890"/><rect x="35" y="1" width="2" height="2" fill="#c8b890"/><rect x="25" y="18" width="2" height="2" fill="#3a3426"/><rect x="26" y="15" width="3" height="2" fill="#c8b890"/><rect x="14" y="36" width="2" height="3" fill="#c8b890"/><rect x="5" y="13" width="2" height="1" fill="#c8b890"/><rect x="22" y="35" width="2" height="2" fill="#3a3426"/><rect x="38" y="18" width="1" height="2" fill="#c8b890"/><rect x="21" y="12" width="2" height="2" fill="#c8b890"/><rect x="36" y="29" width="2" height="2" fill="#c8b890"/><rect x="23" y="29" width="3" height="2" fill="#c8b890"/><rect x="1" y="18" width="2" height="1" fill="#c8b890"/><rect x="12" y="15" width="1" height="3" fill="#c8b890"/><rect x="6" y="1" width="2" height="2" fill="#c8b890"/><rect x="29" y="2" width="1" height="2" fill="#3a3426"/><rect x="16" y="19" width="2" height="3" fill="#3a3426"/><rect x="5" y="20" width="2" height="2" fill="#c8b890"/><rect x="30" y="35" width="3" height="3" fill="#3a3426"/><rect x="25" y="14" width="1" height="2" fill="#3a3426"/><rect x="28" y="1" width="3" height="2" fill="#c8b890"/><rect x="8" y="6" width="2" height="3" fill="#c8b890"/><rect x="20" y="2" width="2" height="2" fill="#c8b890"/><rect x="5" y="16" width="3" height="2" fill="#3a3426"/><rect x="29" y="32" width="3" height="3" fill="#c8b890"/><rect x="15" y="12" width="1" height="3" fill="#3a3426"/><rect x="29" y="29" width="2" height="3" fill="#3a3426"/><rect x="19" y="17" width="1" height="2" fill="#3a3426"/><rect x="10" y="30" width="2" height="2" fill="#c8b890"/><rect x="14" y="9" width="1" height="3" fill="#c8b890"/><rect x="3" y="23" width="1" height="2" fill="#c8b890"/><rect x="14" y="32" width="1" height="2" fill="#c8b890"/><rect x="35" y="11" width="2" height="3" fill="#c8b890"/><rect x="22" y="15" width="3" height="1" fill="#3a3426"/><rect x="4" y="19" width="2" height="2" fill="#3a3426"/><rect x="21" y="21" width="1" height="2" fill="#c8b890"/><rect x="6" y="22" width="1" height="3" fill="#c8b890"/><rect x="11" y="20" width="3" height="2" fill="#c8b890"/><rect x="7" y="11" width="1" height="1" fill="#c8b890"/><rect x="11" y="20" width="3" height="3" fill="#3a3426"/><rect x="3" y="21" width="3" height="2" fill="#3a3426"/><rect x="2" y="25" width="2" height="1" fill="#3a3426"/><rect x="22" y="25" width="1" height="2" fill="#3a3426"/><rect x="28" y="29" width="2" height="1" fill="#3a3426"/><rect x="4" y="0" width="2" height="2" fill="#c8b890"/><rect x="14" y="17" width="2" height="2" fill="#3a3426"/></pattern></defs><defs><linearGradient id="tl" x1="0" y1="0" x2="1" y2="0"><stop offset="0" stop-color="#8cb3cb"/><stop offset="0.18" stop-color="#7aa2bb"/><stop offset="0.36" stop-color="#6890aa"/><stop offset="0.42" stop-color="#5b7f9a"/><stop offset="0.6" stop-color="#6a879b"/><stop offset="0.8" stop-color="#60808f"/><stop offset="1" stop-color="#4e6a80"/></linearGradient><linearGradient id="lv" x1="0" y1="0" x2="0" y2="1"><stop offset="0" stop-color="#8cb3ca"/><stop offset="0.35" stop-color="#a2bfcd"/><stop offset="0.7" stop-color="#bcc9cd"/><stop offset="1" stop-color="#cfd0cf"/></linearGradient><linearGradient id="bt" x1="0" y1="0" x2="1" y2="0"><stop offset="0" stop-color="#1d1f20"/><stop offset="0.35" stop-color="#2c3a40"/><stop offset="1" stop-color="#3a4a50"/></linearGradient><linearGradient id="rv" x1="0" y1="0" x2="0" y2="1"><stop offset="0" stop-color="#3c4f67"/><stop offset="0.6" stop-color="#3e5874"/><stop offset="1" stop-color="#466a8a"/></linearGradient></defs><rect x="0" y="0" width="365" height="60" fill="url(#tl)"/><rect x="365" y="0" width="85" height="60" fill="#34495e"/><rect x="450" y="0" width="160" height="60" fill="#374c5e"/><rect x="610" y="0" width="140" height="60" fill="#4a5d6a"/><rect x="750" y="0" width="60" height="60" fill="#3d5066"/><rect x="810" y="0" width="70" height="60" fill="#46596a"/><rect x="880" y="0" width="20" height="60" fill="#3c5066"/><rect x="900" y="0" width="85" height="60" fill="#48596a"/><rect x="985" y="0" width="188" height="60" fill="#3b4f67"/><rect x="0" y="22" width="60" height="264" fill="url(#lv)"/><rect x="0" y="286" width="60" height="76" fill="#34424c"/><rect x="0" y="281" width="33" height="5" fill="#55606a"/><rect x="0" y="362" width="60" height="58" fill="#2c3438"/><rect x="0" y="420" width="60" height="42" fill="#2c3236"/><rect x="0" y="462" width="60" height="23" fill="#343a3f"/><rect x="0" y="485" width="60" height="22" fill="#4a5560"/><rect x="0" y="507" width="60" height="21" fill="#5f6e78"/><rect x="0" y="528" width="60" height="23" fill="#6c7a7a"/><rect x="0" y="551" width="60" height="21" fill="#5e5040"/><rect x="0" y="572" width="60" height="22" fill="#4e4638"/><rect x="0" y="594" width="60" height="66" fill="#222426"/><rect x="0" y="605" width="380" height="55" fill="#1d1f20"/><rect x="1115" y="0" width="58" height="215" fill="url(#rv)"/><rect x="1115" y="228" width="58" height="52" fill="#2a2e31"/><rect x="1115" y="280" width="58" height="65" fill="#2f373d"/><rect x="1115" y="345" width="58" height="20" fill="#3a3e3a"/><rect x="1115" y="365" width="58" height="20" fill="#9a8052"/><rect x="1115" y="385" width="58" height="15" fill="#8a7a60"/><rect x="1115" y="400" width="58" height="20" fill="#a8a090"/><rect x="1115" y="420" width="58" height="20" fill="#7a7060"/><rect x="1115" y="440" width="58" height="22" fill="#8a8070"/><rect x="1115" y="462" width="58" height="23" fill="#4a4840"/><rect x="1115" y="485" width="58" height="22" fill="#7a7a70"/><rect x="1115" y="507" width="58" height="23" fill="#6a7470"/><rect x="1115" y="530" width="58" height="30" fill="#4a5e66"/><rect x="1115" y="560" width="58" height="25" fill="#566a70"/><rect x="1115" y="585" width="58" height="30" fill="#607878"/><rect x="1115" y="615" width="58" height="23" fill="#5a5040"/><rect x="1115" y="638" width="58" height="22" fill="#564838"/><rect x="1080" y="617" width="64" height="21" fill="#786a56"/><rect x="0" y="630" width="380" height="30" fill="#1d1f20"/><rect x="360" y="630" width="220" height="30" fill="url(#bt)"/><rect x="560" y="630" width="40" height="10" fill="#7a7058"/><rect x="570" y="640" width="30" height="20" fill="#3a4648"/><rect x="600" y="630" width="150" height="10" fill="#5e5c50"/><rect x="600" y="640" width="120" height="20" fill="#394547"/><rect x="720" y="640" width="30" height="20" fill="#4a4a44"/><rect x="750" y="630" width="423" height="8" fill="#4e463a"/><rect x="750" y="638" width="20" height="22" fill="#8a7850"/><rect x="770" y="638" width="25" height="22" fill="#5c5a50"/><rect x="795" y="638" width="20" height="22" fill="#7a7462"/><rect x="815" y="638" width="21" height="22" fill="#6e6250"/><rect x="836" y="638" width="20" height="22" fill="#403c38"/><rect x="856" y="638" width="24" height="22" fill="#3a3c3c"/><rect x="880" y="638" width="22" height="22" fill="#5a5850"/><rect x="902" y="638" width="22" height="22" fill="#6e6656"/><rect x="924" y="638" width="22" height="22" fill="#7a6e5c"/><rect x="946" y="638" width="22" height="22" fill="#6c6250"/><rect x="968" y="638" width="22" height="22" fill="#4e463c"/><rect x="990" y="638" width="22" height="22" fill="#3a3c3a"/><rect x="1012" y="638" width="22" height="22" fill="#383a3c"/><rect x="1034" y="638" width="22" height="22" fill="#48463e"/><rect x="1056" y="638" width="22" height="22" fill="#5c5448"/><rect x="1078" y="638" width="22" height="22" fill="#8a7858"/><rect x="1100" y="638" width="22" height="22" fill="#6a5c4a"/><rect x="1122" y="638" width="22" height="22" fill="#58503e"/><rect x="1144" y="638" width="29" height="22" fill="#4e4436"/><rect x="220" y="0" width="145" height="32" fill="url(#sp1)" opacity="0.45"/><rect x="610" y="0" width="140" height="32" fill="url(#sp2)" opacity="0.3"/><rect x="810" y="0" width="70" height="32" fill="url(#sp2)" opacity="0.3"/><rect x="900" y="0" width="85" height="32" fill="url(#sp2)" opacity="0.3"/><rect x="380" y="633" width="190" height="27" fill="url(#sp3)" opacity="0.25"/><rect x="1141" y="362" width="32" height="60" fill="url(#sp4)" opacity="0.2"/><polygon points="1141,232 1150,226 1156,222 1162,216 1168,214 1173,212 1173,240 1141,240" fill="#2a2e31"/><line x1="0" y1="11.5" x2="1173" y2="11.5" stroke="#d8d0cc" stroke-opacity="0.45" stroke-width="1"/><line x1="0" y1="24.5" x2="1173" y2="24.5" stroke="#d8d0cc" stroke-opacity="0.45" stroke-width="1"/><line x1="2.5" y1="0" x2="2.5" y2="32" stroke="#d8d0cc" stroke-opacity="0.25" stroke-width="1"/><line x1="16.5" y1="0" x2="16.5" y2="32" stroke="#d8d0cc" stroke-opacity="0.25" stroke-width="1"/><line x1="29.5" y1="0" x2="29.5" y2="32" stroke="#d8d0cc" stroke-opacity="0.25" stroke-width="1"/><line x1="44.5" y1="0" x2="44.5" y2="32" stroke="#d8d0cc" stroke-opacity="0.25" stroke-width="1"/><line x1="58.5" y1="0" x2="58.5" y2="32" stroke="#d8d0cc" stroke-opacity="0.25" stroke-width="1"/><line x1="73.5" y1="0" x2="73.5" y2="32" stroke="#d8d0cc" stroke-opacity="0.25" stroke-width="1"/><line x1="88.5" y1="0" x2="88.5" y2="32" stroke="#d8d0cc" stroke-opacity="0.25" stroke-width="1"/><line x1="103.5" y1="0" x2="103.5" y2="32" stroke="#d8d0cc" stroke-opacity="0.25" stroke-width="1"/><line x1="118.5" y1="0" x2="118.5" y2="32" stroke="#d8d0cc" stroke-opacity="0.25" stroke-width="1"/><line x1="131.5" y1="0" x2="131.5" y2="32" stroke="#d8d0cc" stroke-opacity="0.25" stroke-width="1"/><line x1="146.5" y1="0" x2="146.5" y2="32" stroke="#d8d0cc" stroke-opacity="0.25" stroke-width="1"/><line x1="159.5" y1="0" x2="159.5" y2="32" stroke="#d8d0cc" stroke-opacity="0.35" stroke-width="1"/><line x1="173.5" y1="0" x2="173.5" y2="32" stroke="#d8d0cc" stroke-opacity="0.35" stroke-width="1"/><line x1="186.5" y1="0" x2="186.5" y2="32" stroke="#d8d0cc" stroke-opacity="0.35" stroke-width="1"/><line x1="199.5" y1="0" x2="199.5" y2="32" stroke="#d8d0cc" stroke-opacity="0.35" stroke-width="1"/><line x1="212.5" y1="0" x2="212.5" y2="32" stroke="#d8d0cc" stroke-opacity="0.35" stroke-width="1"/><line x1="227.5" y1="0" x2="227.5" y2="32" stroke="#d8d0cc" stroke-opacity="0.35" stroke-width="1"/><line x1="240.5" y1="0" x2="240.5" y2="32" stroke="#d8d0cc" stroke-opacity="0.35" stroke-width="1"/><line x1="254.5" y1="0" x2="254.5" y2="32" stroke="#d8d0cc" stroke-opacity="0.35" stroke-width="1"/><line x1="267.5" y1="0" x2="267.5" y2="32" stroke="#d8d0cc" stroke-opacity="0.35" stroke-width="1"/><line x1="282.5" y1="0" x2="282.5" y2="32" stroke="#d8d0cc" stroke-opacity="0.35" stroke-width="1"/><line x1="297.5" y1="0" x2="297.5" y2="32" stroke="#d8d0cc" stroke-opacity="0.35" stroke-width="1"/><line x1="310.5" y1="0" x2="310.5" y2="32" stroke="#d8d0cc" stroke-opacity="0.35" stroke-width="1"/><line x1="324.5" y1="0" x2="324.5" y2="32" stroke="#d8d0cc" stroke-opacity="0.35" stroke-width="1"/><line x1="337.5" y1="0" x2="337.5" y2="32" stroke="#d8d0cc" stroke-opacity="0.35" stroke-width="1"/><line x1="351.5" y1="0" x2="351.5" y2="32" stroke="#d8d0cc" stroke-opacity="0.35" stroke-width="1"/><line x1="364.5" y1="0" x2="364.5" y2="32" stroke="#d8d0cc" stroke-opacity="0.35" stroke-width="1"/><line x1="377.5" y1="0" x2="377.5" y2="32" stroke="#c8b8b8" stroke-opacity="0.4" stroke-width="1"/><line x1="383.5" y1="0" x2="383.5" y2="32" stroke="#c8b8b8" stroke-opacity="0.4" stroke-width="1"/><line x1="391.5" y1="0" x2="391.5" y2="32" stroke="#c8b8b8" stroke-opacity="0.4" stroke-width="1"/><line x1="398.5" y1="0" x2="398.5" y2="32" stroke="#c8b8b8" stroke-opacity="0.4" stroke-width="1"/><line x1="406.5" y1="0" x2="406.5" y2="32" stroke="#c8b8b8" stroke-opacity="0.4" stroke-width="1"/><line x1="413.5" y1="0" x2="413.5" y2="32" stroke="#c8b8b8" stroke-opacity="0.4" stroke-width="1"/><line x1="420.5" y1="0" x2="420.5" y2="32" stroke="#c8b8b8" stroke-opacity="0.4" stroke-width="1"/><line x1="430.5" y1="0" x2="430.5" y2="32" stroke="#c8b8b8" stroke-opacity="0.4" stroke-width="1"/><line x1="438.5" y1="0" x2="438.5" y2="32" stroke="#c8b8b8" stroke-opacity="0.4" stroke-width="1"/><line x1="445.5" y1="0" x2="445.5" y2="32" stroke="#c8b8b8" stroke-opacity="0.4" stroke-width="1"/><line x1="452.5" y1="0" x2="452.5" y2="32" stroke="#c8b8b8" stroke-opacity="0.4" stroke-width="1"/><line x1="459.5" y1="0" x2="459.5" y2="32" stroke="#c8b8b8" stroke-opacity="0.4" stroke-width="1"/><line x1="469.5" y1="0" x2="469.5" y2="32" stroke="#c8b8b8" stroke-opacity="0.4" stroke-width="1"/><line x1="477.5" y1="0" x2="477.5" y2="32" stroke="#c8b8b8" stroke-opacity="0.4" stroke-width="1"/><line x1="485.5" y1="0" x2="485.5" y2="32" stroke="#c8b8b8" stroke-opacity="0.4" stroke-width="1"/><line x1="495.5" y1="0" x2="495.5" y2="32" stroke="#c8b8b8" stroke-opacity="0.4" stroke-width="1"/><line x1="503.5" y1="0" x2="503.5" y2="32" stroke="#c8b8b8" stroke-opacity="0.4" stroke-width="1"/><line x1="509.5" y1="0" x2="509.5" y2="32" stroke="#c8b8b8" stroke-opacity="0.4" stroke-width="1"/><line x1="516.5" y1="0" x2="516.5" y2="32" stroke="#c8b8b8" stroke-opacity="0.4" stroke-width="1"/><line x1="524.5" y1="0" x2="524.5" y2="32" stroke="#c8b8b8" stroke-opacity="0.4" stroke-width="1"/><line x1="531.5" y1="0" x2="531.5" y2="32" stroke="#c8b8b8" stroke-opacity="0.4" stroke-width="1"/><line x1="539.5" y1="0" x2="539.5" y2="32" stroke="#c8b8b8" stroke-opacity="0.4" stroke-width="1"/><line x1="547.5" y1="0" x2="547.5" y2="32" stroke="#c8b8b8" stroke-opacity="0.4" stroke-width="1"/><line x1="553.5" y1="0" x2="553.5" y2="32" stroke="#c8b8b8" stroke-opacity="0.4" stroke-width="1"/><line x1="560.5" y1="0" x2="560.5" y2="32" stroke="#c8b8b8" stroke-opacity="0.4" stroke-width="1"/><line x1="566.5" y1="0" x2="566.5" y2="32" stroke="#c8b8b8" stroke-opacity="0.4" stroke-width="1"/><line x1="573.5" y1="0" x2="573.5" y2="32" stroke="#c8b8b8" stroke-opacity="0.4" stroke-width="1"/><line x1="582.5" y1="0" x2="582.5" y2="32" stroke="#c8b8b8" stroke-opacity="0.4" stroke-width="1"/><line x1="591.5" y1="0" x2="591.5" y2="32" stroke="#c8b8b8" stroke-opacity="0.4" stroke-width="1"/><line x1="600.5" y1="0" x2="600.5" y2="32" stroke="#c8b8b8" stroke-opacity="0.4" stroke-width="1"/><line x1="606.5" y1="0" x2="606.5" y2="32" stroke="#c8b8b8" stroke-opacity="0.4" stroke-width="1"/><line x1="616.5" y1="0" x2="616.5" y2="32" stroke="#d8d0cc" stroke-opacity="0.35" stroke-width="1"/><line x1="630.5" y1="0" x2="630.5" y2="32" stroke="#d8d0cc" stroke-opacity="0.35" stroke-width="1"/><line x1="643.5" y1="0" x2="643.5" y2="32" stroke="#d8d0cc" stroke-opacity="0.35" stroke-width="1"/><line x1="657.5" y1="0" x2="657.5" y2="32" stroke="#d8d0cc" stroke-opacity="0.35" stroke-width="1"/><line x1="670.5" y1="0" x2="670.5" y2="32" stroke="#d8d0cc" stroke-opacity="0.35" stroke-width="1"/><line x1="683.5" y1="0" x2="683.5" y2="32" stroke="#d8d0cc" stroke-opacity="0.35" stroke-width="1"/><line x1="697.5" y1="0" x2="697.5" y2="32" stroke="#d8d0cc" stroke-opacity="0.35" stroke-width="1"/><line x1="711.5" y1="0" x2="711.5" y2="32" stroke="#d8d0cc" stroke-opacity="0.35" stroke-width="1"/><line x1="725.5" y1="0" x2="725.5" y2="32" stroke="#d8d0cc" stroke-opacity="0.35" stroke-width="1"/><line x1="739.5" y1="0" x2="739.5" y2="32" stroke="#d8d0cc" stroke-opacity="0.35" stroke-width="1"/><line x1="754.5" y1="0" x2="754.5" y2="32" stroke="#d8d0cc" stroke-opacity="0.35" stroke-width="1"/><line x1="768.5" y1="0" x2="768.5" y2="32" stroke="#d8d0cc" stroke-opacity="0.35" stroke-width="1"/><line x1="783.5" y1="0" x2="783.5" y2="32" stroke="#d8d0cc" stroke-opacity="0.35" stroke-width="1"/><line x1="798.5" y1="0" x2="798.5" y2="32" stroke="#d8d0cc" stroke-opacity="0.35" stroke-width="1"/><line x1="812.5" y1="0" x2="812.5" y2="32" stroke="#d8d0cc" stroke-opacity="0.35" stroke-width="1"/><line x1="827.5" y1="0" x2="827.5" y2="32" stroke="#d8d0cc" stroke-opacity="0.35" stroke-width="1"/><line x1="842.5" y1="0" x2="842.5" y2="32" stroke="#d8d0cc" stroke-opacity="0.35" stroke-width="1"/><line x1="857.5" y1="0" x2="857.5" y2="32" stroke="#d8d0cc" stroke-opacity="0.35" stroke-width="1"/><line x1="872.5" y1="0" x2="872.5" y2="32" stroke="#d8d0cc" stroke-opacity="0.35" stroke-width="1"/><line x1="886.5" y1="0" x2="886.5" y2="32" stroke="#d8d0cc" stroke-opacity="0.35" stroke-width="1"/><line x1="901.5" y1="0" x2="901.5" y2="32" stroke="#d8d0cc" stroke-opacity="0.35" stroke-width="1"/><line x1="915.5" y1="0" x2="915.5" y2="32" stroke="#d8d0cc" stroke-opacity="0.35" stroke-width="1"/><line x1="928.5" y1="0" x2="928.5" y2="32" stroke="#d8d0cc" stroke-opacity="0.35" stroke-width="1"/><line x1="941.5" y1="0" x2="941.5" y2="32" stroke="#d8d0cc" stroke-opacity="0.35" stroke-width="1"/><line x1="954.5" y1="0" x2="954.5" y2="32" stroke="#d8d0cc" stroke-opacity="0.35" stroke-width="1"/><line x1="969.5" y1="0" x2="969.5" y2="32" stroke="#d8d0cc" stroke-opacity="0.35" stroke-width="1"/><line x1="983.5" y1="0" x2="983.5" y2="32" stroke="#d8d0cc" stroke-opacity="0.35" stroke-width="1"/><line x1="998.5" y1="0" x2="998.5" y2="32" stroke="#d8d0cc" stroke-opacity="0.35" stroke-width="1"/><line x1="1013.5" y1="0" x2="1013.5" y2="32" stroke="#d8d0cc" stroke-opacity="0.35" stroke-width="1"/><line x1="1026.5" y1="0" x2="1026.5" y2="32" stroke="#d8d0cc" stroke-opacity="0.35" stroke-width="1"/><line x1="1040.5" y1="0" x2="1040.5" y2="32" stroke="#d8d0cc" stroke-opacity="0.35" stroke-width="1"/><line x1="1055.5" y1="0" x2="1055.5" y2="32" stroke="#d8d0cc" stroke-opacity="0.35" stroke-width="1"/><line x1="1068.5" y1="0" x2="1068.5" y2="32" stroke="#d8d0cc" stroke-opacity="0.35" stroke-width="1"/><line x1="1082.5" y1="0" x2="1082.5" y2="32" stroke="#d8d0cc" stroke-opacity="0.35" stroke-width="1"/><line x1="1095.5" y1="0" x2="1095.5" y2="32" stroke="#d8d0cc" stroke-opacity="0.35" stroke-width="1"/><line x1="1108.5" y1="0" x2="1108.5" y2="32" stroke="#d8d0cc" stroke-opacity="0.35" stroke-width="1"/><line x1="1121.5" y1="0" x2="1121.5" y2="32" stroke="#d8d0cc" stroke-opacity="0.35" stroke-width="1"/><line x1="1134.5" y1="0" x2="1134.5" y2="32" stroke="#d8d0cc" stroke-opacity="0.35" stroke-width="1"/><line x1="1148.5" y1="0" x2="1148.5" y2="32" stroke="#d8d0cc" stroke-opacity="0.35" stroke-width="1"/><line x1="1161.5" y1="0" x2="1161.5" y2="32" stroke="#d8d0cc" stroke-opacity="0.35" stroke-width="1"/><line x1="0" y1="0.5" x2="33" y2="0.5" stroke="#e8f0f4" stroke-opacity="0.3" stroke-width="1"/><line x1="0" y1="22.5" x2="33" y2="22.5" stroke="#e8f0f4" stroke-opacity="0.3" stroke-width="1"/><line x1="0" y1="44.5" x2="33" y2="44.5" stroke="#e8f0f4" stroke-opacity="0.3" stroke-width="1"/><line x1="0" y1="66.5" x2="33" y2="66.5" stroke="#e8f0f4" stroke-opacity="0.3" stroke-width="1"/><line x1="0" y1="88.5" x2="33" y2="88.5" stroke="#e8f0f4" stroke-opacity="0.3" stroke-width="1"/><line x1="0" y1="110.5" x2="33" y2="110.5" stroke="#e8f0f4" stroke-opacity="0.3" stroke-width="1"/><line x1="0" y1="132.5" x2="33" y2="132.5" stroke="#e8f0f4" stroke-opacity="0.3" stroke-width="1"/><line x1="0" y1="296.5" x2="33" y2="296.5" stroke="#d0d4d8" stroke-opacity="0.45" stroke-width="1"/><line x1="0" y1="310.5" x2="33" y2="310.5" stroke="#d0d4d8" stroke-opacity="0.45" stroke-width="1"/><line x1="0" y1="324.5" x2="33" y2="324.5" stroke="#d0d4d8" stroke-opacity="0.45" stroke-width="1"/><line x1="0" y1="338.5" x2="33" y2="338.5" stroke="#d0d4d8" stroke-opacity="0.45" stroke-width="1"/><line x1="0" y1="352.5" x2="33" y2="352.5" stroke="#d0d4d8" stroke-opacity="0.45" stroke-width="1"/><line x1="0" y1="366.5" x2="33" y2="366.5" stroke="#d0d4d8" stroke-opacity="0.45" stroke-width="1"/><line x1="0" y1="380.5" x2="33" y2="380.5" stroke="#d0d4d8" stroke-opacity="0.45" stroke-width="1"/><line x1="0" y1="394.5" x2="33" y2="394.5" stroke="#d0d4d8" stroke-opacity="0.45" stroke-width="1"/><line x1="0" y1="408.5" x2="33" y2="408.5" stroke="#d0d4d8" stroke-opacity="0.45" stroke-width="1"/><line x1="0" y1="422.5" x2="33" y2="422.5" stroke="#d0d4d8" stroke-opacity="0.45" stroke-width="1"/><line x1="0" y1="436.5" x2="33" y2="436.5" stroke="#d0d4d8" stroke-opacity="0.45" stroke-width="1"/><line x1="0" y1="450.5" x2="33" y2="450.5" stroke="#d0d4d8" stroke-opacity="0.45" stroke-width="1"/><line x1="0" y1="464.5" x2="33" y2="464.5" stroke="#d0d4d8" stroke-opacity="0.45" stroke-width="1"/><line x1="0" y1="478.5" x2="33" y2="478.5" stroke="#d0d4d8" stroke-opacity="0.45" stroke-width="1"/><line x1="0" y1="484.5" x2="33" y2="484.5" stroke="#d0d4d8" stroke-opacity="0.45" stroke-width="1"/><line x1="0" y1="507.5" x2="33" y2="507.5" stroke="#d0d4d8" stroke-opacity="0.45" stroke-width="1"/><line x1="0" y1="528.5" x2="33" y2="528.5" stroke="#d0d4d8" stroke-opacity="0.45" stroke-width="1"/><line x1="0" y1="551.5" x2="33" y2="551.5" stroke="#d0d4d8" stroke-opacity="0.45" stroke-width="1"/><line x1="0" y1="572.5" x2="33" y2="572.5" stroke="#d0d4d8" stroke-opacity="0.45" stroke-width="1"/><line x1="0" y1="594.5" x2="33" y2="594.5" stroke="#d0d4d8" stroke-opacity="0.45" stroke-width="1"/><line x1="0" y1="616.5" x2="33" y2="616.5" stroke="#d0d4d8" stroke-opacity="0.45" stroke-width="1"/><line x1="0" y1="630.5" x2="33" y2="630.5" stroke="#d0d4d8" stroke-opacity="0.45" stroke-width="1"/><line x1="0" y1="644.5" x2="33" y2="644.5" stroke="#d0d4d8" stroke-opacity="0.45" stroke-width="1"/><line x1="13.5" y1="0" x2="13.5" y2="140" stroke="#e8f0f4" stroke-opacity="0.25" stroke-width="1"/><line x1="13.5" y1="280" x2="13.5" y2="660" stroke="#d0d4d8" stroke-opacity="0.45" stroke-width="1"/><line x1="22.5" y1="0" x2="22.5" y2="140" stroke="#e8f0f4" stroke-opacity="0.25" stroke-width="1"/><line x1="22.5" y1="280" x2="22.5" y2="660" stroke="#d0d4d8" stroke-opacity="0.45" stroke-width="1"/><line x1="1141" y1="10.5" x2="1173" y2="10.5" stroke="#d0d0d0" stroke-opacity="0.4" stroke-width="1"/><line x1="1141" y1="23.5" x2="1173" y2="23.5" stroke="#d0d0d0" stroke-opacity="0.4" stroke-width="1"/><line x1="1141" y1="36.5" x2="1173" y2="36.5" stroke="#d0d0d0" stroke-opacity="0.4" stroke-width="1"/><line x1="1141" y1="49.5" x2="1173" y2="49.5" stroke="#d0d0d0" stroke-opacity="0.4" stroke-width="1"/><line x1="1141" y1="62.5" x2="1173" y2="62.5" stroke="#d0d0d0" stroke-opacity="0.4" stroke-width="1"/><line x1="1141" y1="75.5" x2="1173" y2="75.5" stroke="#d0d0d0" stroke-opacity="0.4" stroke-width="1"/><line x1="1141" y1="88.5" x2="1173" y2="88.5" stroke="#d0d0d0" stroke-opacity="0.4" stroke-width="1"/><line x1="1141" y1="101.5" x2="1173" y2="101.5" stroke="#d0d0d0" stroke-opacity="0.4" stroke-width="1"/><line x1="1141" y1="114.5" x2="1173" y2="114.5" stroke="#d0d0d0" stroke-opacity="0.4" stroke-width="1"/><line x1="1141" y1="127.5" x2="1173" y2="127.5" stroke="#d0d0d0" stroke-opacity="0.4" stroke-width="1"/><line x1="1141" y1="140.5" x2="1173" y2="140.5" stroke="#d0d0d0" stroke-opacity="0.4" stroke-width="1"/><line x1="1141" y1="153.5" x2="1173" y2="153.5" stroke="#d0d0d0" stroke-opacity="0.4" stroke-width="1"/><line x1="1141" y1="166.5" x2="1173" y2="166.5" stroke="#d0d0d0" stroke-opacity="0.4" stroke-width="1"/><line x1="1141" y1="179.5" x2="1173" y2="179.5" stroke="#d0d0d0" stroke-opacity="0.4" stroke-width="1"/><line x1="1141" y1="192.5" x2="1173" y2="192.5" stroke="#d0d0d0" stroke-opacity="0.4" stroke-width="1"/><line x1="1141" y1="205.5" x2="1173" y2="205.5" stroke="#d0d0d0" stroke-opacity="0.4" stroke-width="1"/><line x1="1141" y1="218.5" x2="1173" y2="218.5" stroke="#d0d0d0" stroke-opacity="0.4" stroke-width="1"/><line x1="1141" y1="231.5" x2="1173" y2="231.5" stroke="#d0d0d0" stroke-opacity="0.4" stroke-width="1"/><line x1="1141" y1="244.5" x2="1173" y2="244.5" stroke="#d0d0d0" stroke-opacity="0.4" stroke-width="1"/><line x1="1141" y1="257.5" x2="1173" y2="257.5" stroke="#d0d0d0" stroke-opacity="0.4" stroke-width="1"/><line x1="1141" y1="270.5" x2="1173" y2="270.5" stroke="#d0d0d0" stroke-opacity="0.4" stroke-width="1"/><line x1="1141" y1="283.5" x2="1173" y2="283.5" stroke="#d0d0d0" stroke-opacity="0.4" stroke-width="1"/><line x1="1141" y1="296.5" x2="1173" y2="296.5" stroke="#d0d0d0" stroke-opacity="0.4" stroke-width="1"/><line x1="1141" y1="309.5" x2="1173" y2="309.5" stroke="#d0d0d0" stroke-opacity="0.4" stroke-width="1"/><line x1="1141" y1="322.5" x2="1173" y2="322.5" stroke="#d0d0d0" stroke-opacity="0.4" stroke-width="1"/><line x1="1141" y1="335.5" x2="1173" y2="335.5" stroke="#d0d0d0" stroke-opacity="0.4" stroke-width="1"/><line x1="1141" y1="348.5" x2="1173" y2="348.5" stroke="#d0d0d0" stroke-opacity="0.4" stroke-width="1"/><line x1="1141" y1="365.5" x2="1173" y2="365.5" stroke="#d0d0d0" stroke-opacity="0.4" stroke-width="1"/><line x1="1141" y1="385.5" x2="1173" y2="385.5" stroke="#d0d0d0" stroke-opacity="0.4" stroke-width="1"/><line x1="1141" y1="400.5" x2="1173" y2="400.5" stroke="#d0d0d0" stroke-opacity="0.4" stroke-width="1"/><line x1="1141" y1="420.5" x2="1173" y2="420.5" stroke="#d0d0d0" stroke-opacity="0.4" stroke-width="1"/><line x1="1141" y1="440.5" x2="1173" y2="440.5" stroke="#d0d0d0" stroke-opacity="0.4" stroke-width="1"/><line x1="1141" y1="462.5" x2="1173" y2="462.5" stroke="#d0d0d0" stroke-opacity="0.4" stroke-width="1"/><line x1="1141" y1="485.5" x2="1173" y2="485.5" stroke="#d0d0d0" stroke-opacity="0.4" stroke-width="1"/><line x1="1141" y1="507.5" x2="1173" y2="507.5" stroke="#d0d0d0" stroke-opacity="0.4" stroke-width="1"/><line x1="1141" y1="530.5" x2="1173" y2="530.5" stroke="#d0d0d0" stroke-opacity="0.4" stroke-width="1"/><line x1="1141" y1="560.5" x2="1173" y2="560.5" stroke="#d0d0d0" stroke-opacity="0.4" stroke-width="1"/><line x1="1141" y1="585.5" x2="1173" y2="585.5" stroke="#d0d0d0" stroke-opacity="0.4" stroke-width="1"/><line x1="1141" y1="615.5" x2="1173" y2="615.5" stroke="#d0d0d0" stroke-opacity="0.4" stroke-width="1"/><line x1="1141" y1="638.5" x2="1173" y2="638.5" stroke="#d0d0d0" stroke-opacity="0.4" stroke-width="1"/><line x1="1158.5" y1="0" x2="1158.5" y2="660" stroke="#d8d8d8" stroke-opacity="0.45" stroke-width="1"/><line x1="1168.5" y1="0" x2="1168.5" y2="660" stroke="#d8d8d8" stroke-opacity="0.45" stroke-width="1"/><line x1="0" y1="638.5" x2="760" y2="638.5" stroke="#b8b8b8" stroke-opacity="0.6" stroke-width="1"/><line x1="0" y1="651.5" x2="760" y2="651.5" stroke="#b8b8b8" stroke-opacity="0.6" stroke-width="1"/><line x1="3.5" y1="633" x2="3.5" y2="660" stroke="#c0c0c0" stroke-opacity="0.55" stroke-width="1"/><line x1="14.5" y1="633" x2="14.5" y2="660" stroke="#c0c0c0" stroke-opacity="0.55" stroke-width="1"/><line x1="25.5" y1="633" x2="25.5" y2="660" stroke="#c0c0c0" stroke-opacity="0.55" stroke-width="1"/><line x1="36.5" y1="633" x2="36.5" y2="660" stroke="#c0c0c0" stroke-opacity="0.55" stroke-width="1"/><line x1="46.5" y1="633" x2="46.5" y2="660" stroke="#c0c0c0" stroke-opacity="0.55" stroke-width="1"/><line x1="58.5" y1="633" x2="58.5" y2="660" stroke="#c0c0c0" stroke-opacity="0.55" stroke-width="1"/><line x1="68.5" y1="633" x2="68.5" y2="660" stroke="#c0c0c0" stroke-opacity="0.55" stroke-width="1"/><line x1="80.5" y1="633" x2="80.5" y2="660" stroke="#c0c0c0" stroke-opacity="0.55" stroke-width="1"/><line x1="92.5" y1="633" x2="92.5" y2="660" stroke="#c0c0c0" stroke-opacity="0.55" stroke-width="1"/><line x1="104.5" y1="633" x2="104.5" y2="660" stroke="#c0c0c0" stroke-opacity="0.55" stroke-width="1"/><line x1="114.5" y1="633" x2="114.5" y2="660" stroke="#c0c0c0" stroke-opacity="0.55" stroke-width="1"/><line x1="126.5" y1="633" x2="126.5" y2="660" stroke="#c0c0c0" stroke-opacity="0.55" stroke-width="1"/><line x1="138.5" y1="633" x2="138.5" y2="660" stroke="#c0c0c0" stroke-opacity="0.55" stroke-width="1"/><line x1="148.5" y1="633" x2="148.5" y2="660" stroke="#c0c0c0" stroke-opacity="0.55" stroke-width="1"/><line x1="160.5" y1="633" x2="160.5" y2="660" stroke="#c0c0c0" stroke-opacity="0.55" stroke-width="1"/><line x1="172.5" y1="633" x2="172.5" y2="660" stroke="#c0c0c0" stroke-opacity="0.55" stroke-width="1"/><line x1="183.5" y1="633" x2="183.5" y2="660" stroke="#c0c0c0" stroke-opacity="0.55" stroke-width="1"/><line x1="195.5" y1="633" x2="195.5" y2="660" stroke="#c0c0c0" stroke-opacity="0.55" stroke-width="1"/><line x1="207.5" y1="633" x2="207.5" y2="660" stroke="#c0c0c0" stroke-opacity="0.55" stroke-width="1"/><line x1="219.5" y1="633" x2="219.5" y2="660" stroke="#c0c0c0" stroke-opacity="0.55" stroke-width="1"/><line x1="231.5" y1="633" x2="231.5" y2="660" stroke="#c0c0c0" stroke-opacity="0.55" stroke-width="1"/><line x1="242.5" y1="633" x2="242.5" y2="660" stroke="#c0c0c0" stroke-opacity="0.55" stroke-width="1"/><line x1="252.5" y1="633" x2="252.5" y2="660" stroke="#c0c0c0" stroke-opacity="0.55" stroke-width="1"/><line x1="263.5" y1="633" x2="263.5" y2="660" stroke="#c0c0c0" stroke-opacity="0.55" stroke-width="1"/><line x1="273.5" y1="633" x2="273.5" y2="660" stroke="#c0c0c0" stroke-opacity="0.55" stroke-width="1"/><line x1="283.5" y1="633" x2="283.5" y2="660" stroke="#c0c0c0" stroke-opacity="0.55" stroke-width="1"/><line x1="295.5" y1="633" x2="295.5" y2="660" stroke="#c0c0c0" stroke-opacity="0.55" stroke-width="1"/><line x1="305.5" y1="633" x2="305.5" y2="660" stroke="#c0c0c0" stroke-opacity="0.55" stroke-width="1"/><line x1="317.5" y1="633" x2="317.5" y2="660" stroke="#c0c0c0" stroke-opacity="0.55" stroke-width="1"/><line x1="328.5" y1="633" x2="328.5" y2="660" stroke="#c0c0c0" stroke-opacity="0.55" stroke-width="1"/><line x1="340.5" y1="633" x2="340.5" y2="660" stroke="#c0c0c0" stroke-opacity="0.55" stroke-width="1"/><line x1="352.5" y1="633" x2="352.5" y2="660" stroke="#c0c0c0" stroke-opacity="0.55" stroke-width="1"/><line x1="364.5" y1="633" x2="364.5" y2="660" stroke="#c0c0c0" stroke-opacity="0.55" stroke-width="1"/><line x1="374.5" y1="633" x2="374.5" y2="660" stroke="#c0c0c0" stroke-opacity="0.55" stroke-width="1"/><line x1="385.5" y1="633" x2="385.5" y2="660" stroke="#c0c0c0" stroke-opacity="0.55" stroke-width="1"/><line x1="395.5" y1="633" x2="395.5" y2="660" stroke="#c0c0c0" stroke-opacity="0.55" stroke-width="1"/><line x1="406.5" y1="633" x2="406.5" y2="660" stroke="#c0c0c0" stroke-opacity="0.55" stroke-width="1"/><line x1="418.5" y1="633" x2="418.5" y2="660" stroke="#c0c0c0" stroke-opacity="0.55" stroke-width="1"/><line x1="430.5" y1="633" x2="430.5" y2="660" stroke="#c0c0c0" stroke-opacity="0.55" stroke-width="1"/><line x1="440.5" y1="633" x2="440.5" y2="660" stroke="#c0c0c0" stroke-opacity="0.55" stroke-width="1"/><line x1="451.5" y1="633" x2="451.5" y2="660" stroke="#c0c0c0" stroke-opacity="0.55" stroke-width="1"/><line x1="463.5" y1="633" x2="463.5" y2="660" stroke="#c0c0c0" stroke-opacity="0.55" stroke-width="1"/><line x1="475.5" y1="633" x2="475.5" y2="660" stroke="#c0c0c0" stroke-opacity="0.55" stroke-width="1"/><line x1="485.5" y1="633" x2="485.5" y2="660" stroke="#c0c0c0" stroke-opacity="0.55" stroke-width="1"/><line x1="495.5" y1="633" x2="495.5" y2="660" stroke="#c0c0c0" stroke-opacity="0.55" stroke-width="1"/><line x1="505.5" y1="633" x2="505.5" y2="660" stroke="#c0c0c0" stroke-opacity="0.55" stroke-width="1"/><line x1="516.5" y1="633" x2="516.5" y2="660" stroke="#c0c0c0" stroke-opacity="0.55" stroke-width="1"/><line x1="528.5" y1="633" x2="528.5" y2="660" stroke="#c0c0c0" stroke-opacity="0.55" stroke-width="1"/><line x1="540.5" y1="633" x2="540.5" y2="660" stroke="#c0c0c0" stroke-opacity="0.55" stroke-width="1"/><line x1="550.5" y1="633" x2="550.5" y2="660" stroke="#c0c0c0" stroke-opacity="0.55" stroke-width="1"/><line x1="561.5" y1="633" x2="561.5" y2="660" stroke="#c0c0c0" stroke-opacity="0.55" stroke-width="1"/><line x1="571.5" y1="633" x2="571.5" y2="660" stroke="#c0c0c0" stroke-opacity="0.55" stroke-width="1"/><line x1="581.5" y1="633" x2="581.5" y2="660" stroke="#c0c0c0" stroke-opacity="0.55" stroke-width="1"/><line x1="592.5" y1="633" x2="592.5" y2="660" stroke="#c0c0c0" stroke-opacity="0.55" stroke-width="1"/><line x1="602.5" y1="633" x2="602.5" y2="660" stroke="#c0c0c0" stroke-opacity="0.55" stroke-width="1"/><line x1="613.5" y1="633" x2="613.5" y2="660" stroke="#c0c0c0" stroke-opacity="0.55" stroke-width="1"/><line x1="625.5" y1="633" x2="625.5" y2="660" stroke="#c0c0c0" stroke-opacity="0.55" stroke-width="1"/><line x1="636.5" y1="633" x2="636.5" y2="660" stroke="#c0c0c0" stroke-opacity="0.55" stroke-width="1"/><line x1="646.5" y1="633" x2="646.5" y2="660" stroke="#c0c0c0" stroke-opacity="0.55" stroke-width="1"/><line x1="657.5" y1="633" x2="657.5" y2="660" stroke="#c0c0c0" stroke-opacity="0.55" stroke-width="1"/><line x1="667.5" y1="633" x2="667.5" y2="660" stroke="#c0c0c0" stroke-opacity="0.55" stroke-width="1"/><line x1="677.5" y1="633" x2="677.5" y2="660" stroke="#c0c0c0" stroke-opacity="0.55" stroke-width="1"/><line x1="688.5" y1="633" x2="688.5" y2="660" stroke="#c0c0c0" stroke-opacity="0.55" stroke-width="1"/><line x1="698.5" y1="633" x2="698.5" y2="660" stroke="#c0c0c0" stroke-opacity="0.55" stroke-width="1"/><line x1="710.5" y1="633" x2="710.5" y2="660" stroke="#c0c0c0" stroke-opacity="0.55" stroke-width="1"/><line x1="721.5" y1="633" x2="721.5" y2="660" stroke="#c0c0c0" stroke-opacity="0.55" stroke-width="1"/><line x1="732.5" y1="633" x2="732.5" y2="660" stroke="#c0c0c0" stroke-opacity="0.55" stroke-width="1"/><line x1="743.5" y1="633" x2="743.5" y2="660" stroke="#c0c0c0" stroke-opacity="0.55" stroke-width="1"/><line x1="753.5" y1="633" x2="753.5" y2="660" stroke="#c0c0c0" stroke-opacity="0.55" stroke-width="1"/><line x1="750" y1="638.5" x2="1173" y2="638.5" stroke="#d8d0b8" stroke-opacity="0.5" stroke-width="1"/><line x1="750.5" y1="633" x2="750.5" y2="660" stroke="#d8d0b8" stroke-opacity="0.45" stroke-width="1"/><line x1="770.5" y1="633" x2="770.5" y2="660" stroke="#d8d0b8" stroke-opacity="0.45" stroke-width="1"/><line x1="795.5" y1="633" x2="795.5" y2="660" stroke="#d8d0b8" stroke-opacity="0.45" stroke-width="1"/><line x1="815.5" y1="633" x2="815.5" y2="660" stroke="#d8d0b8" stroke-opacity="0.45" stroke-width="1"/><line x1="836.5" y1="633" x2="836.5" y2="660" stroke="#d8d0b8" stroke-opacity="0.45" stroke-width="1"/><line x1="856.5" y1="633" x2="856.5" y2="660" stroke="#d8d0b8" stroke-opacity="0.45" stroke-width="1"/><line x1="880.5" y1="633" x2="880.5" y2="660" stroke="#d8d0b8" stroke-opacity="0.45" stroke-width="1"/><line x1="902.5" y1="633" x2="902.5" y2="660" stroke="#d8d0b8" stroke-opacity="0.45" stroke-width="1"/><line x1="924.5" y1="633" x2="924.5" y2="660" stroke="#d8d0b8" stroke-opacity="0.45" stroke-width="1"/><line x1="946.5" y1="633" x2="946.5" y2="660" stroke="#d8d0b8" stroke-opacity="0.45" stroke-width="1"/><line x1="968.5" y1="633" x2="968.5" y2="660" stroke="#d8d0b8" stroke-opacity="0.45" stroke-width="1"/><line x1="990.5" y1="633" x2="990.5" y2="660" stroke="#d8d0b8" stroke-opacity="0.45" stroke-width="1"/><line x1="1012.5" y1="633" x2="1012.5" y2="660" stroke="#d8d0b8" stroke-opacity="0.45" stroke-width="1"/><line x1="1034.5" y1="633" x2="1034.5" y2="660" stroke="#d8d0b8" stroke-opacity="0.45" stroke-width="1"/><line x1="1056.5" y1="633" x2="1056.5" y2="660" stroke="#d8d0b8" stroke-opacity="0.45" stroke-width="1"/><line x1="1078.5" y1="633" x2="1078.5" y2="660" stroke="#d8d0b8" stroke-opacity="0.45" stroke-width="1"/><line x1="1100.5" y1="633" x2="1100.5" y2="660" stroke="#d8d0b8" stroke-opacity="0.45" stroke-width="1"/><line x1="1122.5" y1="633" x2="1122.5" y2="660" stroke="#d8d0b8" stroke-opacity="0.45" stroke-width="1"/><line x1="1144.5" y1="633" x2="1144.5" y2="660" stroke="#d8d0b8" stroke-opacity="0.45" stroke-width="1"/></svg>
<div class="cardborder"></div>
<div class="card">
  <svg class="abs" style="left:0;top:0" width="1107" height="599" viewBox="34 32 1107 599">
    <defs><pattern id="fg" patternUnits="userSpaceOnUse" x="26.5" y="17" width="46" height="46"><path d="M0.5 0 V46 M0 0.5 H46" stroke="#ffffff" stroke-opacity="0.01" stroke-width="1" fill="none"/></pattern></defs>
    <rect x="32" y="30" width="1111" height="603" fill="url(#fg)"/>
    <line x1="67.2" y1="30" x2="67.2" y2="633" stroke="#272c2e" stroke-width="1.2"/>
    <g stroke="#2a3032" stroke-width="1.4" fill="none">
      <line x1="610.5" y1="30" x2="610.5" y2="633"/>
      <line x1="30" y1="63" x2="1143" y2="63"/>
      <line x1="30" y1="599.5" x2="1143" y2="599.5"/>
    </g>
    <line x1="623.5" y1="30" x2="623.5" y2="633" stroke="#1f2324" stroke-width="1"/>
    <defs>
      <linearGradient id="ca" gradientUnits="userSpaceOnUse" x1="68" y1="0" x2="464" y2="0"><stop offset="0" stop-color="#434c4e"/><stop offset="0.4" stop-color="#363d3f"/><stop offset="0.85" stop-color="#1c1f20"/><stop offset="1" stop-color="#161818"/></linearGradient>
      <linearGradient id="cb" gradientUnits="userSpaceOnUse" x1="68" y1="0" x2="590" y2="0"><stop offset="0" stop-color="#434c4e"/><stop offset="0.5" stop-color="#333a3c"/><stop offset="0.92" stop-color="#1c1f20"/><stop offset="1" stop-color="#161818"/></linearGradient>
      <linearGradient id="cc" gradientUnits="userSpaceOnUse" x1="68" y1="0" x2="778" y2="0"><stop offset="0" stop-color="#434c4e"/><stop offset="0.4" stop-color="#353c3e"/><stop offset="0.75" stop-color="#2a2f30"/></linearGradient>
    </defs>
    <g stroke-width="1" fill="none">
      <circle cx="264.5" cy="331" r="197" stroke="url(#ca)"/>
      <circle cx="324.5" cy="331" r="257" stroke="url(#cb)"/>
      <circle cx="416.5" cy="331" r="349" stroke="url(#cc)"/>
    </g>
    <g fill="#f2f1ee" style="filter:drop-shadow(0 0 4px rgba(255,255,255,0.4)) drop-shadow(0 0 12px rgba(255,255,255,0.18))">
      <polygon points="67.2,73.1 77,73.1 77,92.8 67.2,92.8"/>
      <polygon points="77,63.1 87.3,63.1 96.8,72.5 96.8,92.8 87,92.8 87,73.1 77,73.1"/>
      <polygon points="96.8,63.1 107.5,63.1 117.3,72.7 117.3,92.8 107.2,92.8 107.2,73.1 96.8,73.1"/>
      <path d="M71.7 63.3 Q72.2 67.2 76.1 67.7 Q72.2 68.2 71.7 72.1 Q71.2 68.2 67.3 67.7 Q71.2 67.2 71.7 63.3Z"/>
    </g>
  </svg>
  <div class="abs title" style="left:32.5px;top:167px">MarkTag:<br>The Intelligence Core</div>
  <div class="abs para" style="left:33px;top:289px"><div style="color:#cfcfcc;letter-spacing:0.48px">MarkTag tracks every customer interaction on your website</div><div style="letter-spacing:0.56px"><span style="color:#cfcfcc">and</span> apps in real time that goes way beyond clicks</div><div>&nbsp;</div><div style="letter-spacing:0.55px">It reveals intent, hesitation, preferences, browsing</div><div style="letter-spacing:0.7px">patterns, product comparisons, and engagement</div><div style="letter-spacing:1px">tendencies.</div></div>
  <div class="panel">
    <div class="abs t" style="left:59.5px;top:80px;font-size:9.5px;color:#4b5262">Data room</div>
    <div class="abs" style="left:120px;top:79px;width:1.4px;height:13px;background:#8d95a8;transform:rotate(24deg)"></div>
    <div class="abs t" style="left:136px;top:80px;font-size:9.5px;font-weight:bold;color:#1b3de0">Marktag</div>
    <div class="abs t" style="left:59.5px;top:101.3px;font-size:19.3px;font-weight:bold;color:#131a29;-webkit-text-stroke:0.5px rgba(229,243,209,0.8)">Marktag</div>
    <div class="abs t" style="left:59.5px;top:130.3px;font-size:12px;letter-spacing:0.22px;color:#5b6272">Manage your connected data sources from one place.</div>
    <div class="tcard">
      <div class="abs t" style="left:12px;top:14.8px;font-size:14.8px;font-weight:bold;color:#131a29;-webkit-text-stroke:0.35px rgba(255,255,255,0.8)">Marktag</div>
      <div class="badge" style="left:73.5px;top:14.5px;width:48px;height:17px;background:#dfe4fc;border-color:#a9b5f4;color:#333a4e;line-height:14px;-webkit-text-stroke:0.2px #333a4e">4 active</div>
      <div class="abs t" style="left:12px;top:39px;font-size:10.9px;color:#687080">Primary data warehouse.</div>
      <div class="hdr">
        <div class="abs t" style="left:12px;top:10px;font-size:9.5px;color:#4b5567">Name</div>
        <div class="abs t" style="left:204.5px;top:10px;font-size:9.5px;color:#4b5567">Status</div>
        <svg class="abs" style="left:237px;top:11px" width="10" height="10" viewBox="0 0 10 10"><path d="M5 1 V8.6 M1.6 5.4 L5 8.8 L8.4 5.4" stroke="#4b5567" stroke-width="1.1" fill="none"/></svg>
        <div class="abs t" style="left:397.5px;top:10px;font-size:9.5px;color:#4b5567">Type</div>
      </div>
      <div class="row" style="top:101.5px;background:#f7f8fa">
        <div class="abs t" style="left:12px;top:17px;font-size:11px;color:#1f2633">Primary</div>
        <div class="badge" style="left:204.5px;top:13px;width:60px;height:17px;background:#ebfaf0;border-color:#b3ebc7;color:#1b7a46">Connected</div>
        <div class="ic" style="left:397px;top:6.5px"><svg class="abs" style="left:5px;top:5px" width="20" height="20" viewBox="0 0 20 20"><defs><linearGradient id="fbg" x1="0" y1="0" x2="0" y2="1"><stop offset="0" stop-color="#18acfe"/><stop offset="1" stop-color="#0163e0"/></linearGradient></defs><circle cx="10" cy="10" r="7" fill="url(#fbg)"/><path d="M10.9 17 V11.3 H12.6 L12.9 9.3 H10.9 V8.1 C10.9 7.5 11.2 7.1 12 7.1 H13 V5.4 C12.6 5.3 12.1 5.3 11.5 5.3 C9.9 5.3 8.9 6.2 8.9 7.9 V9.3 H7.2 V11.3 H8.9 V17 Z" fill="#fff"/></svg></div>
        <div class="abs t" style="left:437px;top:17px;font-size:11px;color:#262c38;-webkit-text-stroke:0.25px #262c38">ID: 4521</div>
      </div>
      <div class="row" style="top:144.5px;background:#ffffff">
        <div class="abs t" style="left:12px;top:17px;font-size:11px;color:#1f2633">Shopify store</div>
        <div class="badge" style="left:204.5px;top:13px;width:60px;height:17px;background:#ebfaf0;border-color:#b3ebc7;color:#1b7a46">Connected</div>
        <div class="ic" style="left:397px;top:6.5px"><svg class="abs" style="left:5px;top:5px" width="20" height="20" viewBox="0 0 20 20"><defs><linearGradient id="fbg" x1="0" y1="0" x2="0" y2="1"><stop offset="0" stop-color="#18acfe"/><stop offset="1" stop-color="#0163e0"/></linearGradient></defs><circle cx="10" cy="10" r="7" fill="url(#fbg)"/><path d="M10.9 17 V11.3 H12.6 L12.9 9.3 H10.9 V8.1 C10.9 7.5 11.2 7.1 12 7.1 H13 V5.4 C12.6 5.3 12.1 5.3 11.5 5.3 C9.9 5.3 8.9 6.2 8.9 7.9 V9.3 H7.2 V11.3 H8.9 V17 Z" fill="#fff"/></svg></div>
        <div class="abs t" style="left:437px;top:17px;font-size:11px;color:#262c38;-webkit-text-stroke:0.25px #262c38">ID: 4521</div>
      </div>
      <div class="row" style="top:187.5px;background:#f7f8fa">
        <div class="abs t" style="left:12px;top:17px;font-size:11px;color:#1f2633">SM_June 25</div>
        <div class="badge" style="left:204.5px;top:13px;width:60px;height:17px;background:#ebfaf0;border-color:#b3ebc7;color:#1b7a46">Connected</div>
        <div class="ic" style="left:397px;top:6.5px"><svg class="abs" style="left:5px;top:5px" width="20" height="20" viewBox="0 0 20 20"><path d="M7.4 7 C7.8 4.6 8.7 3.6 9.6 3.6 C10.5 3.6 11.1 4.6 11.3 6" stroke="#a3a9b0" stroke-width="0.9" fill="none"/><path d="M4.7 7.3 L12.4 5.7 L12.4 16.4 L4.5 15 Z" fill="#95bf47"/><path d="M12.4 5.7 L14.3 6.5 L15.1 16.2 L12.4 16.4 Z" fill="#5e8e3e"/><path d="M9.6 8.7 C9.1 8.4 8.5 8.4 8 8.6 C7.2 9 7.1 9.9 7.6 10.5 C8.1 11.1 9.1 11.3 9.1 12.1 C9.1 12.8 8.3 13.2 7.1 12.8 L6.8 13.8 C8.4 14.3 10.3 13.7 10.3 12 C10.3 10.8 9 10.5 8.6 10 C8.3 9.6 8.7 9.1 9.4 9.4 Z" fill="#fff"/></svg></div>
        <div class="abs t" style="left:437px;top:17px;font-size:11px;color:#262c38;-webkit-text-stroke:0.25px #262c38">ID: 4521</div>
      </div>
      <div class="row" style="top:230.5px;background:#ffffff">
        <div class="abs t" style="left:12px;top:17px;font-size:11px;color:#1f2633">CRM_exp</div>
        <div class="badge" style="left:204.5px;top:13px;width:34px;height:17px;background:#fdeff0;border-color:#f5c3c5;color:#c0312f">Error</div>
        <div class="ic" style="left:397px;top:6.5px"><svg class="abs" style="left:5px;top:5px" width="20" height="20" viewBox="0 0 20 20"><g stroke="#ff6640" fill="none"><circle cx="12.9" cy="11.7" r="2.95" stroke-width="2"/><line x1="4.1" y1="4" x2="10.6" y2="9.3" stroke-width="1.3"/><line x1="13.1" y1="4.4" x2="13" y2="8.8" stroke-width="1.3"/><line x1="7.8" y1="16.6" x2="10.8" y2="13.8" stroke-width="1.2"/></g><circle cx="4.1" cy="4" r="1.6" fill="#ff6640"/><circle cx="13.1" cy="4.4" r="1.4" fill="#ff6640"/><circle cx="7.8" cy="16.6" r="1.25" fill="#ff6640"/></svg></div>
        <div class="abs t" style="left:437px;top:17px;font-size:11px;color:#262c38;-webkit-text-stroke:0.25px #262c38">ID: 4521</div>
      </div>
      
    </div>
  </div>
</div>
</body></html>
